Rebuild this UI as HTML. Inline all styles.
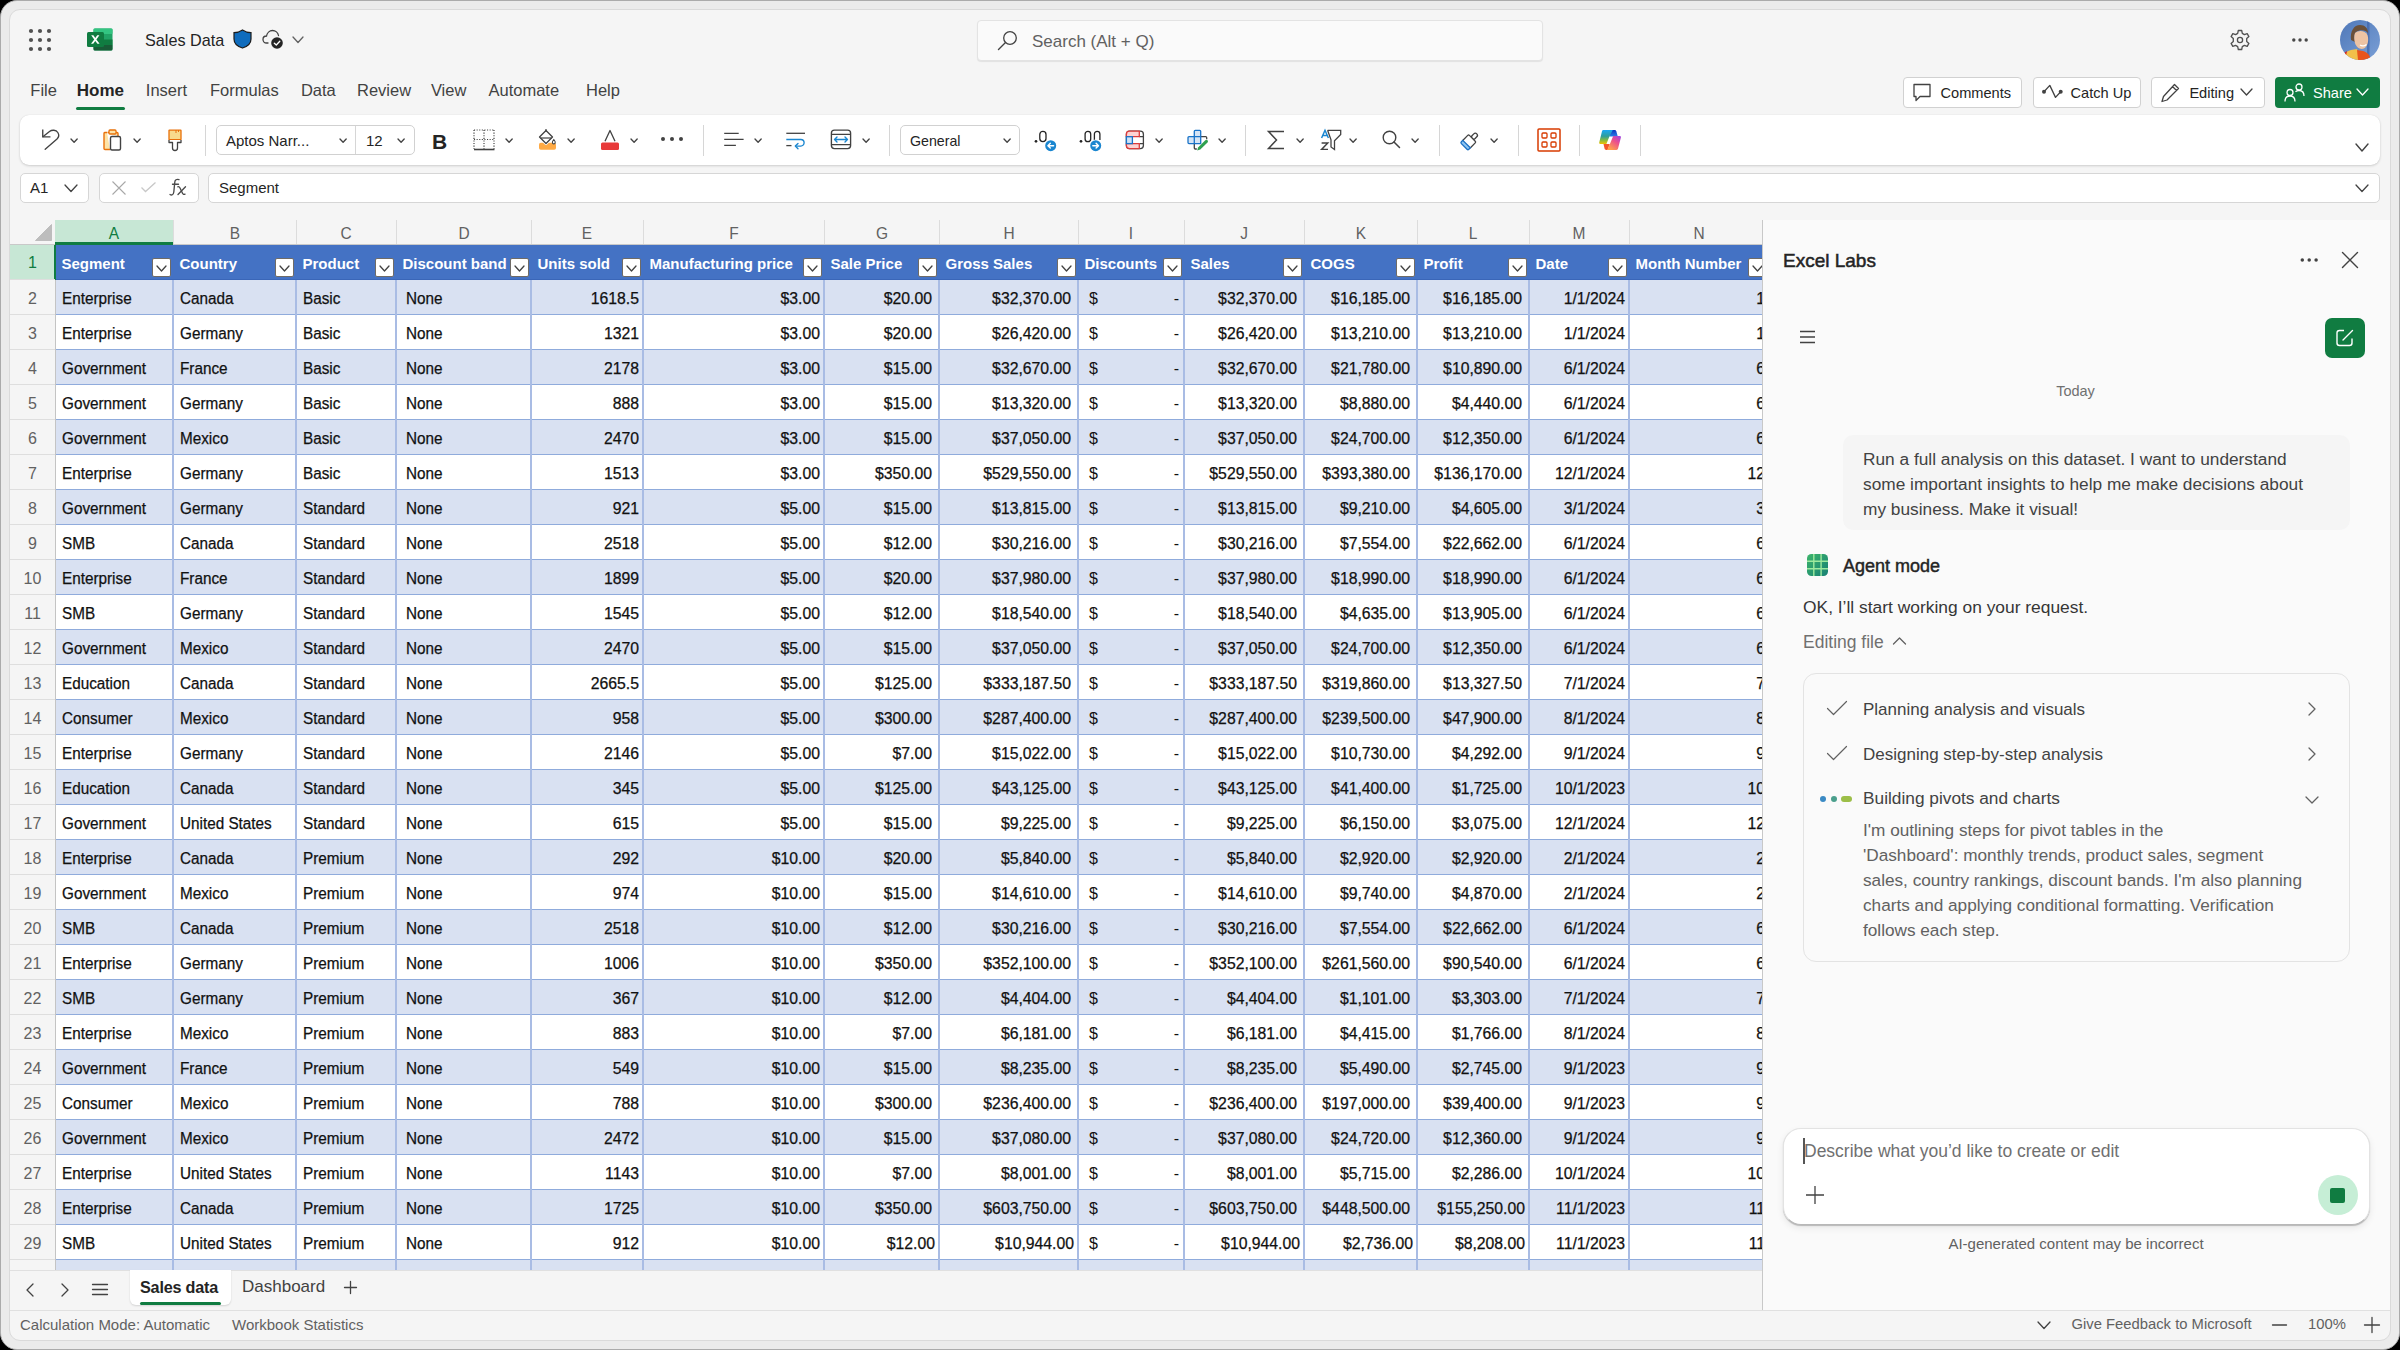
<!DOCTYPE html><html><head><meta charset="utf-8"><style>
html,body{margin:0;padding:0}
body{width:2400px;height:1350px;position:relative;overflow:hidden;background:#000;font-family:"Liberation Sans", sans-serif}
.t{position:absolute;white-space:nowrap;line-height:1}
.r{position:absolute}
svg.r{overflow:visible}
</style></head><body>
<div class="r" style="left:0px;top:0px;width:2400px;height:1350px;box-sizing:border-box;border:1px solid #ababab;border-radius:17px;background:#ebebeb"></div><div class="r" style="left:9px;top:9px;width:2382px;height:1332px;box-sizing:border-box;border:1px solid #dadada;border-radius:11px;background:#f5f5f5"></div><svg class="r" style="left:0px;top:0px;" width="60" height="60" viewBox="0 0 60 60"><circle cx="31" cy="31" r="2.1" fill="#505050"/><circle cx="31" cy="40" r="2.1" fill="#505050"/><circle cx="31" cy="49" r="2.1" fill="#505050"/><circle cx="40" cy="31" r="2.1" fill="#505050"/><circle cx="40" cy="40" r="2.1" fill="#505050"/><circle cx="40" cy="49" r="2.1" fill="#505050"/><circle cx="49" cy="31" r="2.1" fill="#505050"/><circle cx="49" cy="40" r="2.1" fill="#505050"/><circle cx="49" cy="49" r="2.1" fill="#505050"/></svg><svg class="r" style="left:87px;top:28px;" width="26" height="23" viewBox="0 0 26 23">
<rect x="6.5" y="0.5" width="19" height="22" rx="1.5" fill="#21a366"/>
<rect x="6.5" y="0.5" width="19" height="5.5" rx="1" fill="#33c481"/>
<rect x="6.5" y="11.5" width="19" height="5.5" fill="#107c41"/>
<path d="M6.5 17 H25.5 V21 a1.5 1.5 0 0 1 -1.5 1.5 H8 a1.5 1.5 0 0 1 -1.5 -1.5z" fill="#185c37"/>
<rect x="0" y="4" width="17" height="15" rx="1.5" fill="#107c41"/>
<path d="M4.2 7.2 L7.2 11.5 L4 15.8 H6.2 L8.3 12.9 L10.4 15.8 H12.6 L9.4 11.5 L12.4 7.2 H10.2 L8.3 10 L6.4 7.2z" fill="#fff"/>
</svg><div class="t" style="left:145px;top:32.29px;font-size:16.2px;color:#242424;font-weight:400;">Sales Data</div><svg class="r" style="left:233px;top:29px;" width="19" height="20" viewBox="0 0 19 20"><path d="M9.5 1 C6.5 3 4 3.6 1 3.6 V10 C1 14.5 4.5 17.5 9.5 19 C14.5 17.5 18 14.5 18 10 V3.6 C15 3.6 12.5 3 9.5 1z" fill="#0f6cbd" stroke="#1b1b1b" stroke-width="1.2"/></svg><svg class="r" style="left:262px;top:28px;" width="22" height="21" viewBox="0 0 22 21"><path d="M6 15 H4.5 C2.5 15 1 13.5 1 11.5 C1 9.5 2.5 8 4.5 8 C5 5 7.5 2.5 10.5 2.5 C13.5 2.5 16 4.8 16.5 7.5" fill="none" stroke="#424242" stroke-width="1.3" stroke-linecap="round"/>
<circle cx="15" cy="15" r="5.8" fill="#242424"/><path d="M12.3 15.2 L14.3 17 L17.8 13.2" fill="none" stroke="#fff" stroke-width="1.3" stroke-linecap="round" stroke-linejoin="round"/></svg><svg class="r" style="left:291.5px;top:36.25px;" width="12" height="7.5" viewBox="0 0 12 7.5"><path d="M1 1 L6.0 6.5 L11 1" fill="none" stroke="#616161" stroke-width="1.3" stroke-linecap="round" stroke-linejoin="round"/></svg><div class="r" style="left:977px;top:20px;width:566px;height:41px;box-sizing:border-box;background:#fafafa;border:1px solid #e3e3e3;border-radius:4px;box-shadow:0 1px 1px rgba(0,0,0,.08)"></div><svg class="r" style="left:997px;top:30px;" width="22" height="21" viewBox="0 0 22 21"><circle cx="13" cy="8" r="6.3" fill="none" stroke="#424242" stroke-width="1.3"/><path d="M8.5 12.6 L1.5 19.5" stroke="#424242" stroke-width="1.4" stroke-linecap="round"/></svg><div class="t" style="left:1032px;top:33.11px;font-size:17px;color:#616161;font-weight:400;">Search (Alt + Q)</div><svg class="r" style="left:2228px;top:28px;" width="24" height="24" viewBox="0 0 24 24"><g fill="none" stroke="#505050" stroke-width="1.3" stroke-linejoin="round">
<path d="M10.3 1.5 H13.7 L14.3 4.4 L16.4 5.6 L19.2 4.6 L20.9 7.6 L18.7 9.6 V12.4 L20.9 14.4 L19.2 17.4 L16.4 16.4 L14.3 17.6 L13.7 20.5 H10.3 L9.7 17.6 L7.6 16.4 L4.8 17.4 L3.1 14.4 L5.3 12.4 V9.6 L3.1 7.6 L4.8 4.6 L7.6 5.6 L9.7 4.4z" transform="translate(0 1)"/>
<circle cx="12" cy="12" r="2.6"/></g></svg><svg class="r" style="left:2289px;top:36px;" width="22" height="8" viewBox="0 0 22 8"><circle cx="4.8" cy="4" r="1.7" fill="#484848"/><circle cx="11" cy="4" r="1.7" fill="#484848"/><circle cx="17.2" cy="4" r="1.7" fill="#484848"/></svg><svg class="r" style="left:2340px;top:20px;" width="40" height="40" viewBox="0 0 40 40"><defs><clipPath id="av"><circle cx="20" cy="20" r="20"/></clipPath>
<linearGradient id="avbg" x1="0" y1="0" x2="1" y2="1"><stop offset="0" stop-color="#4f78b8"/><stop offset="1" stop-color="#7a9fd6"/></linearGradient></defs>
<g clip-path="url(#av)"><rect width="40" height="40" fill="url(#avbg)"/>
<rect x="27" y="0" width="2.5" height="40" fill="#3f64a8" opacity=".7"/>
<path d="M11 20 C10 11 14 5 20 5 C25 5 28 8 28 13 C26 10 20 9 16 12 C14 14 14 18 15 22z" fill="#6b5038"/>
<path d="M15 13 C18 10 25 10 27.5 15 C29 20 28 26 24 28.5 C20 30 16 27 15 23 C14 19 14 16 15 13z" fill="#edc3a3"/>
<path d="M20 25 C22 26.5 25 26 26.5 24.5" fill="none" stroke="#fff" stroke-width="1.2"/>
<path d="M3 40 C4 33 7 31 11 30 L17 29 L21 40z" fill="#f2c04a"/>
<path d="M17 30 L23 31 C27 32 30 35 31 40 H18z" fill="#e8541c"/>
<path d="M4 33 L7 31 L6 36z" fill="#d62020"/></g></svg><div class="t" style="left:30.3px;top:82.03px;font-size:16.5px;color:#424242;font-weight:400;">File</div><div class="t" style="left:76.8px;top:81.61px;font-size:17px;color:#242424;font-weight:700;letter-spacing:0px">Home</div><div class="t" style="left:145.8px;top:82.03px;font-size:16.5px;color:#424242;font-weight:400;">Insert</div><div class="t" style="left:210px;top:82.03px;font-size:16.5px;color:#424242;font-weight:400;">Formulas</div><div class="t" style="left:300.9px;top:82.03px;font-size:16.5px;color:#424242;font-weight:400;">Data</div><div class="t" style="left:357px;top:82.03px;font-size:16.5px;color:#424242;font-weight:400;">Review</div><div class="t" style="left:430.9px;top:82.03px;font-size:16.5px;color:#424242;font-weight:400;">View</div><div class="t" style="left:488.5px;top:82.03px;font-size:16.5px;color:#424242;font-weight:400;">Automate</div><div class="t" style="left:586px;top:82.03px;font-size:16.5px;color:#424242;font-weight:400;">Help</div><div class="r" style="left:76px;top:107px;width:49px;height:3px;background:#107c41;border-radius:2px"></div><div class="r" style="left:1903px;top:77px;width:119px;height:31px;box-sizing:border-box;background:#fff;border:1px solid #d1d1d1;border-radius:4px"></div><div class="r" style="left:2033px;top:77px;width:108px;height:31px;box-sizing:border-box;background:#fff;border:1px solid #d1d1d1;border-radius:4px"></div><div class="r" style="left:2151px;top:77px;width:114px;height:31px;box-sizing:border-box;background:#fff;border:1px solid #d1d1d1;border-radius:4px"></div><div class="r" style="left:2275px;top:77px;width:105px;height:31px;box-sizing:border-box;background:#107c41;border-radius:4px"></div><svg class="r" style="left:1912px;top:83px;" width="20" height="19" viewBox="0 0 20 19"><path d="M2 1.5 H18 V13.5 H8 L4 17.5 V13.5 H2z" fill="none" stroke="#424242" stroke-width="1.3" stroke-linejoin="round"/></svg><div class="t" style="left:1940.5px;top:85.64px;font-size:14.6px;color:#242424;font-weight:400;">Comments</div><svg class="r" style="left:2040px;top:82px;" width="24" height="20" viewBox="0 0 24 20"><path d="M4 9.7 L9.8 3.4 L15.5 15.4 L20.7 9.7" fill="none" stroke="#424242" stroke-width="1.3" stroke-linejoin="round" stroke-linecap="round"/><circle cx="4" cy="9.7" r="2" fill="#424242"/><circle cx="20.7" cy="9.7" r="2" fill="#424242"/></svg><div class="t" style="left:2070.5px;top:85.64px;font-size:14.6px;color:#242424;font-weight:400;">Catch Up</div><svg class="r" style="left:2160px;top:82px;" width="22" height="21" viewBox="0 0 22 21"><path d="M14.5 2.5 L18.5 6.5 L7 18 L2 19.5 L3.5 14.5z M12.5 4.5 L16.5 8.5" fill="none" stroke="#424242" stroke-width="1.3" stroke-linejoin="round"/></svg><div class="t" style="left:2189.4px;top:85.64px;font-size:14.6px;color:#242424;font-weight:400;">Editing</div><svg class="r" style="left:2240.0px;top:88.0px;" width="13" height="8" viewBox="0 0 13 8"><path d="M1 1 L6.5 7 L12 1" fill="none" stroke="#424242" stroke-width="1.3" stroke-linecap="round" stroke-linejoin="round"/></svg><svg class="r" style="left:2284px;top:83px;" width="22" height="19" viewBox="0 0 22 19"><g fill="none" stroke="#fff" stroke-width="1.3"><circle cx="6" cy="9.5" r="3"/><path d="M1 18.5 C1 15 3 13 6 13 C9 13 11 15 11 18.5"/><circle cx="15" cy="4" r="3"/><path d="M11.5 8.8 C12.3 7.9 13.6 7.5 15 7.5 C18 7.5 20 9.5 20 13"/></g></svg><div class="t" style="left:2313px;top:85.64px;font-size:14.6px;color:#fff;font-weight:400;">Share</div><svg class="r" style="left:2355.5px;top:88.0px;" width="13" height="8" viewBox="0 0 13 8"><path d="M1 1 L6.5 7 L12 1" fill="none" stroke="#fff" stroke-width="1.3" stroke-linecap="round" stroke-linejoin="round"/></svg><div class="r" style="left:20px;top:115px;width:2360px;height:50px;background:#fff;border-radius:9px;box-shadow:0 1px 2.5px rgba(0,0,0,.16),0 0 1px rgba(0,0,0,.10)"></div><div class="r" style="left:205px;top:125px;width:1px;height:31px;background:#d6d6d6"></div><div class="r" style="left:703px;top:125px;width:1px;height:31px;background:#d6d6d6"></div><div class="r" style="left:889px;top:125px;width:1px;height:31px;background:#d6d6d6"></div><div class="r" style="left:1245px;top:125px;width:1px;height:31px;background:#d6d6d6"></div><div class="r" style="left:1439px;top:125px;width:1px;height:31px;background:#d6d6d6"></div><div class="r" style="left:1518px;top:125px;width:1px;height:31px;background:#d6d6d6"></div><div class="r" style="left:1579px;top:125px;width:1px;height:31px;background:#d6d6d6"></div><div class="r" style="left:1640px;top:125px;width:1px;height:31px;background:#d6d6d6"></div><svg class="r" style="left:40px;top:128px;" width="22" height="23" viewBox="0 0 22 23"><path d="M2.75 2.2 V8.9 H9.8" fill="none" stroke="#424242" stroke-width="1.35" stroke-linecap="square" stroke-linejoin="miter"/><path d="M3.2 8.6 L9.5 3.5 C12 1.6 16 1.8 17.8 4.5 C19.2 6.6 18.8 9.2 17 11 L5.2 21.3" fill="none" stroke="#424242" stroke-width="1.35" stroke-linecap="round"/></svg><svg class="r" style="left:70.4px;top:137.8px;" width="8.2" height="5.2" viewBox="0 0 8.2 5.2"><path d="M1 1 L4.1 4.2 L7.2 1" fill="none" stroke="#424242" stroke-width="1.35" stroke-linecap="round" stroke-linejoin="round"/></svg><svg class="r" style="left:103px;top:129px;" width="19" height="22" viewBox="0 0 19 22"><path d="M4 3.5 H1.8 A1 1 0 0 0 1 4.5 V19.5 A1 1 0 0 0 2 20.5 H7" fill="#fde3a7" stroke="#e8710a" stroke-width="1.4"/>
<path d="M4.5 3.5 H14 A1 1 0 0 1 15 4.5 V7" fill="#fde3a7" stroke="#e8710a" stroke-width="1.4"/>
<rect x="6" y="1" width="7" height="4" rx="1" fill="#fde3a7" stroke="#e8710a" stroke-width="1.3"/>
<rect x="7.5" y="7.5" width="10" height="13.5" rx="1.5" fill="#fff" stroke="#424242" stroke-width="1.4"/></svg><svg class="r" style="left:132.9px;top:137.8px;" width="8.2" height="5.2" viewBox="0 0 8.2 5.2"><path d="M1 1 L4.1 4.2 L7.2 1" fill="none" stroke="#424242" stroke-width="1.35" stroke-linecap="round" stroke-linejoin="round"/></svg><svg class="r" style="left:168px;top:129px;" width="14" height="22" viewBox="0 0 14 22"><rect x="1" y="1.2" width="12" height="9.5" rx="0.4" fill="#f8db8c" stroke="#e8710a" stroke-width="1.3"/>
<path d="M8 1 V4 M10.5 1 V3" stroke="#e8710a" stroke-width="1"/>
<path d="M1 11 V13.5 H4.5 V19 A2.5 2.5 0 0 0 9.5 19 V13.5 H13 V11" fill="#fff" stroke="#424242" stroke-width="1.3" stroke-linejoin="round"/></svg><div class="r" style="left:216px;top:125px;width:199px;height:30px;box-sizing:border-box;border:1px solid #d1d1d1;border-radius:5px;background:#fff"></div><div class="r" style="left:355px;top:126px;width:1px;height:28px;background:#d6d6d6"></div><div class="t" style="left:226px;top:133.30px;font-size:15px;color:#242424;font-weight:400;">Aptos Narr...</div><svg class="r" style="left:338.9px;top:137.8px;" width="8.2" height="5.2" viewBox="0 0 8.2 5.2"><path d="M1 1 L4.1 4.2 L7.2 1" fill="none" stroke="#424242" stroke-width="1.35" stroke-linecap="round" stroke-linejoin="round"/></svg><div class="t" style="left:366px;top:133.30px;font-size:15px;color:#242424;font-weight:400;">12</div><svg class="r" style="left:396.9px;top:137.8px;" width="8.2" height="5.2" viewBox="0 0 8.2 5.2"><path d="M1 1 L4.1 4.2 L7.2 1" fill="none" stroke="#424242" stroke-width="1.35" stroke-linecap="round" stroke-linejoin="round"/></svg><div class="t" style="left:432px;top:130.62px;font-size:21px;color:#242424;font-weight:700;">B</div><svg class="r" style="left:473px;top:129px;" width="23" height="22" viewBox="0 0 23 22"><g stroke="#424242" stroke-width="1.2" stroke-dasharray="1.1 1.5" fill="none">
<path d="M1 1 H21 M1 10.5 H21 M1 1 V20 M11 1 V20 M21 1 V20"/></g><path d="M1 20.5 H21.5" stroke="#424242" stroke-width="1.6"/></svg><svg class="r" style="left:504.9px;top:137.8px;" width="8.2" height="5.2" viewBox="0 0 8.2 5.2"><path d="M1 1 L4.1 4.2 L7.2 1" fill="none" stroke="#424242" stroke-width="1.35" stroke-linecap="round" stroke-linejoin="round"/></svg><svg class="r" style="left:537px;top:129px;" width="21" height="22" viewBox="0 0 21 22"><rect x="2" y="13.8" width="17" height="7" rx="1.8" fill="#ffaa44"/>
<path d="M9 1.5 L15.5 8 L9 14.5 L2.5 8z" fill="#fff" stroke="#fff" stroke-width="3" stroke-linejoin="round"/>
<path d="M9 1.5 L15.5 8 L9 14.5 L2.5 8z" fill="#fff" stroke="#424242" stroke-width="1.3" stroke-linejoin="round"/>
<path d="M3.5 9 H14.5" stroke="#424242" stroke-width="1.2"/>
<path d="M9 0 V3" stroke="#424242" stroke-width="1.2"/>
<path d="M16.8 10.5 C17.9 11.8 18.4 12.7 18.2 13.5 A1.4 1.4 0 0 1 15.4 13.5 C15.2 12.7 15.7 11.8 16.8 10.5z" fill="#fff" stroke="#424242" stroke-width="1.1"/></svg><svg class="r" style="left:566.9px;top:137.8px;" width="8.2" height="5.2" viewBox="0 0 8.2 5.2"><path d="M1 1 L4.1 4.2 L7.2 1" fill="none" stroke="#424242" stroke-width="1.35" stroke-linecap="round" stroke-linejoin="round"/></svg><svg class="r" style="left:600px;top:129px;" width="20" height="22" viewBox="0 0 20 22"><path d="M5 12.3 L10 1.5 L15 12.3" fill="none" stroke="#424242" stroke-width="1.3" stroke-linejoin="round"/>
<rect x="1" y="13.5" width="18" height="7.5" rx="1.5" fill="#e83a3a"/></svg><svg class="r" style="left:629.9px;top:137.8px;" width="8.2" height="5.2" viewBox="0 0 8.2 5.2"><path d="M1 1 L4.1 4.2 L7.2 1" fill="none" stroke="#424242" stroke-width="1.35" stroke-linecap="round" stroke-linejoin="round"/></svg><svg class="r" style="left:660px;top:135px;" width="24" height="8" viewBox="0 0 24 8"><circle cx="3" cy="4" r="2" fill="#424242"/><circle cx="12" cy="4" r="2" fill="#424242"/><circle cx="21" cy="4" r="2" fill="#424242"/></svg><svg class="r" style="left:723px;top:131px;" width="22" height="17" viewBox="0 0 22 17"><path d="M1.2 2.3 H15.7 M1.2 8.4 H20.6 M1.2 14.4 H12.9" stroke="#424242" stroke-width="1.3"/></svg><svg class="r" style="left:753.9px;top:137.8px;" width="8.2" height="5.2" viewBox="0 0 8.2 5.2"><path d="M1 1 L4.1 4.2 L7.2 1" fill="none" stroke="#424242" stroke-width="1.35" stroke-linecap="round" stroke-linejoin="round"/></svg><svg class="r" style="left:785px;top:131px;" width="23" height="19" viewBox="0 0 23 19"><path d="M1.3 2.3 H20" stroke="#424242" stroke-width="1.3"/>
<path d="M1.3 8.5 H15.8 A3.3 3.3 0 0 1 15.8 15.1 H10.5" fill="none" stroke="#1a86d0" stroke-width="1.35"/>
<path d="M13 12.4 L10.3 15.1 L13 17.8" fill="none" stroke="#1a86d0" stroke-width="1.35" stroke-linecap="round" stroke-linejoin="round"/>
<path d="M1.3 14.6 H6.5" stroke="#424242" stroke-width="1.3"/></svg><svg class="r" style="left:830px;top:129px;" width="22" height="21" viewBox="0 0 22 21"><rect x="1.4" y="1.1" width="19.2" height="18.5" rx="3" fill="none" stroke="#424242" stroke-width="1.35"/>
<path d="M1.4 5.4 H20.6 M1.4 15.7 H20.6" stroke="#424242" stroke-width="1.3"/>
<path d="M4.5 10.5 H17.5 M7 8 L4.5 10.5 L7 13 M15 8 L17.5 10.5 L15 13" fill="none" stroke="#1a86d0" stroke-width="1.35" stroke-linecap="round" stroke-linejoin="round"/></svg><svg class="r" style="left:861.9px;top:137.8px;" width="8.2" height="5.2" viewBox="0 0 8.2 5.2"><path d="M1 1 L4.1 4.2 L7.2 1" fill="none" stroke="#424242" stroke-width="1.35" stroke-linecap="round" stroke-linejoin="round"/></svg><div class="r" style="left:900px;top:125px;width:120px;height:30px;box-sizing:border-box;border:1px solid #d1d1d1;border-radius:5px;background:#fff"></div><div class="t" style="left:910px;top:133.98px;font-size:14.2px;color:#242424;font-weight:400;">General</div><svg class="r" style="left:1002.9px;top:137.8px;" width="8.2" height="5.2" viewBox="0 0 8.2 5.2"><path d="M1 1 L4.1 4.2 L7.2 1" fill="none" stroke="#424242" stroke-width="1.35" stroke-linecap="round" stroke-linejoin="round"/></svg><svg class="r" style="left:1033px;top:130px;" width="24" height="22" viewBox="0 0 24 22"><circle cx="3" cy="11.3" r="1.35" fill="#242424"/><rect x="6.8" y="1.3" width="6.2" height="10.4" rx="3.1" fill="none" stroke="#242424" stroke-width="1.3"/>
<circle cx="17.7" cy="15.7" r="6.3" fill="#fff"/><circle cx="17.7" cy="15.7" r="5.5" fill="#1a86d0"/><path d="M20.6 15.7 H15 M17.3 13.3 L14.9 15.7 L17.3 18.1" fill="none" stroke="#fff" stroke-width="1.4" stroke-linecap="round" stroke-linejoin="round"/></svg><svg class="r" style="left:1078px;top:130px;" width="24" height="22" viewBox="0 0 24 22"><circle cx="3" cy="11.3" r="1.35" fill="#242424"/><rect x="7.1" y="1.3" width="5.6" height="10.4" rx="2.8" fill="none" stroke="#242424" stroke-width="1.3"/>
<path d="M16.4 10 V4.1 A2.75 2.75 0 0 1 21.9 4.1 V10" fill="none" stroke="#242424" stroke-width="1.3"/>
<circle cx="17.7" cy="15.7" r="6.3" fill="#fff"/><circle cx="17.7" cy="15.7" r="5.5" fill="#1a86d0"/><path d="M14.8 15.7 H20.4 M18.1 13.3 L20.5 15.7 L18.1 18.1" fill="none" stroke="#fff" stroke-width="1.4" stroke-linecap="round" stroke-linejoin="round"/></svg><svg class="r" style="left:1125px;top:130px;" width="20" height="20" viewBox="0 0 20 20"><rect x="1.4" y="1.2" width="17" height="17.4" rx="3" fill="#fff" stroke="#424242" stroke-width="1.3"/>
<path d="M14.3 6.7 H18.4 M14.3 13.6 H18.4" stroke="#424242" stroke-width="1.3"/>
<path d="M1.4 6.7 V4.2 A3 3 0 0 1 4.4 1.2 H14.3 V6.7z" fill="#fcd3d3" stroke="#dc3c3c" stroke-width="1.3" stroke-linejoin="round"/>
<path d="M1.4 13.6 H14.3 V18.6 H4.4 A3 3 0 0 1 1.4 15.6z" fill="#fcd3d3" stroke="#dc3c3c" stroke-width="1.3" stroke-linejoin="round"/>
<rect x="1.4" y="6.7" width="6" height="6.9" fill="#cfe2f6" stroke="#1a73c8" stroke-width="1.3"/></svg><svg class="r" style="left:1154.9px;top:137.8px;" width="8.2" height="5.2" viewBox="0 0 8.2 5.2"><path d="M1 1 L4.1 4.2 L7.2 1" fill="none" stroke="#424242" stroke-width="1.35" stroke-linecap="round" stroke-linejoin="round"/></svg><svg class="r" style="left:1186px;top:129px;" width="24" height="23" viewBox="0 0 24 23"><path d="M14.7 7.7 H19.7 A1 1 0 0 1 20.7 8.7 V10.2 M8.3 14.6 V19 A1 1 0 0 0 9.3 20 H10.8" fill="none" stroke="#424242" stroke-width="1.3"/>
<path d="M8.3 7.7 V2.3 A1 1 0 0 1 9.3 1.3 H13.7 A1 1 0 0 1 14.7 2.3 V14.6 H3 A1 1 0 0 1 2 13.6 V8.7 A1 1 0 0 1 3 7.7z" fill="#d6e4f5" stroke="#1a73c8" stroke-width="1.3" stroke-linejoin="round"/>
<path d="M8.3 7.7 H14.7 M8.3 7.7 V14.6" stroke="#1a73c8" stroke-width="1.3"/>
<path d="M11.2 21.6 L12.1 18.4 L19.3 11.2 A1.5 1.5 0 0 1 21.5 13.4 L14.3 20.6z" fill="#2ea04f"/></svg><svg class="r" style="left:1217.9px;top:137.8px;" width="8.2" height="5.2" viewBox="0 0 8.2 5.2"><path d="M1 1 L4.1 4.2 L7.2 1" fill="none" stroke="#424242" stroke-width="1.35" stroke-linecap="round" stroke-linejoin="round"/></svg><svg class="r" style="left:1267px;top:130px;" width="18" height="20" viewBox="0 0 18 20"><path d="M17 1.5 H1.5 L9.5 10 L1.5 18.5 H17" fill="none" stroke="#424242" stroke-width="1.5" stroke-linejoin="miter"/></svg><svg class="r" style="left:1295.9px;top:137.8px;" width="8.2" height="5.2" viewBox="0 0 8.2 5.2"><path d="M1 1 L4.1 4.2 L7.2 1" fill="none" stroke="#424242" stroke-width="1.35" stroke-linecap="round" stroke-linejoin="round"/></svg><svg class="r" style="left:1320px;top:129px;" width="23" height="22" viewBox="0 0 23 22"><path d="M1.6 9 L5 1.3 L8.4 9 M2.7 6.6 H7.3" fill="none" stroke="#1a86d0" stroke-width="1.5"/>
<path d="M1.6 14 H7.8 L1.6 20.4 H8" fill="none" stroke="#424242" stroke-width="1.4"/>
<path d="M7.6 1.3 H20.7 V5.5 L14.5 11.7 V20.5 L11 18 V10.8 L7.6 1.3" fill="none" stroke="#424242" stroke-width="1.3" stroke-linejoin="miter"/></svg><svg class="r" style="left:1348.9px;top:137.8px;" width="8.2" height="5.2" viewBox="0 0 8.2 5.2"><path d="M1 1 L4.1 4.2 L7.2 1" fill="none" stroke="#424242" stroke-width="1.35" stroke-linecap="round" stroke-linejoin="round"/></svg><svg class="r" style="left:1382px;top:130px;" width="19" height="20" viewBox="0 0 19 20"><circle cx="7.5" cy="7.5" r="6.3" fill="none" stroke="#424242" stroke-width="1.4"/><path d="M12 12 L17.5 17.5" stroke="#424242" stroke-width="1.5" stroke-linecap="round"/></svg><svg class="r" style="left:1410.9px;top:137.8px;" width="8.2" height="5.2" viewBox="0 0 8.2 5.2"><path d="M1 1 L4.1 4.2 L7.2 1" fill="none" stroke="#424242" stroke-width="1.35" stroke-linecap="round" stroke-linejoin="round"/></svg><svg class="r" style="left:1458px;top:128px;" width="24" height="24" viewBox="0 0 24 24"><g transform="rotate(45 12 12.5)">
<rect x="10" y="3" width="4.2" height="6.5" rx="2.1" fill="#fff" stroke="#424242" stroke-width="1.3"/>
<rect x="6.8" y="9.3" width="10.6" height="8.8" rx="1.2" fill="#fff" stroke="#424242" stroke-width="1.3"/>
<path d="M6.8 17.5 H17.4 V19.5 A1.3 1.3 0 0 1 16.1 20.8 H8.1 A1.3 1.3 0 0 1 6.8 19.5z" fill="#8ec5f2" stroke="#1a6fc4" stroke-width="1.3"/></g></svg><svg class="r" style="left:1489.9px;top:137.8px;" width="8.2" height="5.2" viewBox="0 0 8.2 5.2"><path d="M1 1 L4.1 4.2 L7.2 1" fill="none" stroke="#424242" stroke-width="1.35" stroke-linecap="round" stroke-linejoin="round"/></svg><svg class="r" style="left:1537px;top:128px;" width="24" height="24" viewBox="0 0 24 24"><rect x="1" y="1" width="22" height="22" rx="1" fill="#fff" stroke="#d83b01" stroke-width="1.5"/>
<rect x="5" y="5" width="5" height="5" rx="1" fill="none" stroke="#d83b01" stroke-width="1.3"/>
<rect x="14" y="5" width="5" height="5" rx="1" fill="none" stroke="#d83b01" stroke-width="1.3"/>
<rect x="5" y="14" width="5" height="5" rx="1" fill="none" stroke="#d83b01" stroke-width="1.3"/>
<rect x="14" y="14" width="5" height="5" rx="1" fill="none" stroke="#d83b01" stroke-width="1.3"/></svg><svg class="r" style="left:1599px;top:130px;" width="22" height="20" viewBox="0 0 22 20"><defs><linearGradient id="cpA" x1="0" y1="0" x2="0" y2="1"><stop offset="0" stop-color="#1aa7f5"/><stop offset=".45" stop-color="#2f9e9a"/><stop offset=".7" stop-color="#7db84a"/><stop offset="1" stop-color="#f0c400"/></linearGradient>
<linearGradient id="cpB" x1="1" y1="0" x2="0.3" y2="1"><stop offset="0" stop-color="#9b45e6"/><stop offset=".45" stop-color="#ec4f8c"/><stop offset="1" stop-color="#ffa24a"/></linearGradient>
<linearGradient id="cpC" x1="0" y1="0" x2="0" y2="1"><stop offset="0" stop-color="#0a36c0"/><stop offset="1" stop-color="#2a7ee8"/></linearGradient></defs>
<path d="M12 0 H15.5 C16.4 0 17 0.5 17.3 1.3 L18.8 6.5 H10.3z" fill="url(#cpC)"/>
<path d="M4.5 0 H13.8 L10.4 6.5 L7.4 14 H1.5 C0.6 14 0 13.4 0.2 12.5 L3 1.2 C3.2 0.5 3.8 0 4.5 0z" fill="url(#cpA)"/>
<path d="M4.5 14 H10.8 L8.6 20 H7.2 C6.4 20 5.8 19.5 5.6 18.8z" fill="#f4572b"/>
<path d="M14.2 6 H20.8 C21.6 6 22.1 6.7 21.9 7.5 L19 18.8 C18.8 19.5 18.2 20 17.5 20 H8.2 L10.9 14z" fill="url(#cpB)"/></svg><svg class="r" style="left:2354.5px;top:142.5px;" width="14" height="9" viewBox="0 0 14 9"><path d="M1 1 L7.0 8 L13 1" fill="none" stroke="#424242" stroke-width="1.4" stroke-linecap="round" stroke-linejoin="round"/></svg><div class="r" style="left:20px;top:173px;width:69px;height:30px;box-sizing:border-box;border:1px solid #d6d6d6;border-radius:5px;background:#fff"></div><div class="t" style="left:30px;top:179.80px;font-size:15px;color:#242424;font-weight:400;">A1</div><svg class="r" style="left:64.0px;top:183.75px;" width="14" height="8.5" viewBox="0 0 14 8.5"><path d="M1 1 L7.0 7.5 L13 1" fill="none" stroke="#424242" stroke-width="1.3" stroke-linecap="round" stroke-linejoin="round"/></svg><div class="r" style="left:99px;top:173px;width:100px;height:30px;box-sizing:border-box;border:1px solid #d6d6d6;border-radius:5px;background:#fff"></div><svg class="r" style="left:111px;top:180px;" width="16" height="16" viewBox="0 0 16 16"><path d="M1.5 1.5 L14.5 14.5 M14.5 1.5 L1.5 14.5" stroke="#a8a8a8" stroke-width="1.1"/></svg><svg class="r" style="left:140px;top:181px;" width="17" height="12" viewBox="0 0 17 12"><path d="M1.5 6.5 L5.5 10.5 L15.5 1.5" fill="none" stroke="#c8c8c8" stroke-width="1.3"/></svg><svg class="r" style="left:168px;top:177px;" width="20" height="20" viewBox="0 0 20 20"><g fill="none" stroke="#4a4a4a" stroke-width="1.35" stroke-linecap="round"><path d="M2 17.5 C3.5 18.5 5.5 18 5.8 15 L6.8 5 C7 2.8 8.5 2 11 2.6"/><path d="M4.5 7.2 H10.5"/><path d="M9.8 9.8 C10.8 9.4 11.5 10 12 11 L14.5 16.2 C15 17.2 16 17.8 17 17.2"/><path d="M17.5 9.8 L10 17.5"/></g></svg><div class="r" style="left:208px;top:173px;width:2172px;height:30px;box-sizing:border-box;border:1px solid #d6d6d6;border-radius:5px;background:#fff"></div><div class="t" style="left:219px;top:179.80px;font-size:15px;color:#242424;font-weight:400;">Segment</div><svg class="r" style="left:2355.0px;top:183.75px;" width="14" height="8.5" viewBox="0 0 14 8.5"><path d="M1 1 L7.0 7.5 L13 1" fill="none" stroke="#424242" stroke-width="1.3" stroke-linecap="round" stroke-linejoin="round"/></svg><div class="r" style="left:0;top:0;width:1763px;height:1270px;overflow:hidden"><div class="r" style="left:10px;top:220px;width:1753px;height:25px;background:#f5f5f5"></div><div class="r" style="left:10px;top:244px;width:1753px;height:1px;background:#c9c9c9"></div><svg class="r" style="left:34px;top:223px;" width="19" height="19" viewBox="0 0 19 19"><path d="M17.5 1.5 V17.5 H1.5z" fill="#bdbdbd" stroke="#bdbdbd" stroke-width="1" stroke-linejoin="round"/></svg><div class="r" style="left:55px;top:220px;width:118px;height:25px;background:#c7e7d5"></div><div class="r" style="left:55px;top:242px;width:118px;height:3px;background:#107c41"></div><div class="t" style="left:-386.0px;width:1000px;text-align:center;top:225.20px;font-size:16.3px;color:#107c41;font-weight:400;;transform:scaleX(0.95);transform-origin:center">A</div><div class="r" style="left:173px;top:220px;width:1px;height:24px;background:#dcdcdc"></div><div class="t" style="left:-265.5px;width:1000px;text-align:center;top:225.20px;font-size:16.3px;color:#616161;font-weight:400;;transform:scaleX(0.95);transform-origin:center">B</div><div class="r" style="left:296px;top:220px;width:1px;height:24px;background:#dcdcdc"></div><div class="t" style="left:-154.0px;width:1000px;text-align:center;top:225.20px;font-size:16.3px;color:#616161;font-weight:400;;transform:scaleX(0.95);transform-origin:center">C</div><div class="r" style="left:396px;top:220px;width:1px;height:24px;background:#dcdcdc"></div><div class="t" style="left:-36.5px;width:1000px;text-align:center;top:225.20px;font-size:16.3px;color:#616161;font-weight:400;;transform:scaleX(0.95);transform-origin:center">D</div><div class="r" style="left:531px;top:220px;width:1px;height:24px;background:#dcdcdc"></div><div class="t" style="left:87.0px;width:1000px;text-align:center;top:225.20px;font-size:16.3px;color:#616161;font-weight:400;;transform:scaleX(0.95);transform-origin:center">E</div><div class="r" style="left:643px;top:220px;width:1px;height:24px;background:#dcdcdc"></div><div class="t" style="left:233.5px;width:1000px;text-align:center;top:225.20px;font-size:16.3px;color:#616161;font-weight:400;;transform:scaleX(0.95);transform-origin:center">F</div><div class="r" style="left:824px;top:220px;width:1px;height:24px;background:#dcdcdc"></div><div class="t" style="left:381.5px;width:1000px;text-align:center;top:225.20px;font-size:16.3px;color:#616161;font-weight:400;;transform:scaleX(0.95);transform-origin:center">G</div><div class="r" style="left:939px;top:220px;width:1px;height:24px;background:#dcdcdc"></div><div class="t" style="left:508.5px;width:1000px;text-align:center;top:225.20px;font-size:16.3px;color:#616161;font-weight:400;;transform:scaleX(0.95);transform-origin:center">H</div><div class="r" style="left:1078px;top:220px;width:1px;height:24px;background:#dcdcdc"></div><div class="t" style="left:631.0px;width:1000px;text-align:center;top:225.20px;font-size:16.3px;color:#616161;font-weight:400;;transform:scaleX(0.95);transform-origin:center">I</div><div class="r" style="left:1184px;top:220px;width:1px;height:24px;background:#dcdcdc"></div><div class="t" style="left:744.0px;width:1000px;text-align:center;top:225.20px;font-size:16.3px;color:#616161;font-weight:400;;transform:scaleX(0.95);transform-origin:center">J</div><div class="r" style="left:1304px;top:220px;width:1px;height:24px;background:#dcdcdc"></div><div class="t" style="left:860.5px;width:1000px;text-align:center;top:225.20px;font-size:16.3px;color:#616161;font-weight:400;;transform:scaleX(0.95);transform-origin:center">K</div><div class="r" style="left:1417px;top:220px;width:1px;height:24px;background:#dcdcdc"></div><div class="t" style="left:973.0px;width:1000px;text-align:center;top:225.20px;font-size:16.3px;color:#616161;font-weight:400;;transform:scaleX(0.95);transform-origin:center">L</div><div class="r" style="left:1529px;top:220px;width:1px;height:24px;background:#dcdcdc"></div><div class="t" style="left:1079.0px;width:1000px;text-align:center;top:225.20px;font-size:16.3px;color:#616161;font-weight:400;;transform:scaleX(0.95);transform-origin:center">M</div><div class="r" style="left:1629px;top:220px;width:1px;height:24px;background:#dcdcdc"></div><div class="t" style="left:1199.0px;width:1000px;text-align:center;top:225.20px;font-size:16.3px;color:#616161;font-weight:400;;transform:scaleX(0.95);transform-origin:center">N</div><div class="r" style="left:173px;top:220px;width:1px;height:24px;background:#dcdcdc"></div><div class="r" style="left:10px;top:245px;width:45px;height:1025px;background:#f5f5f5"></div><div class="r" style="left:55px;top:245px;width:1px;height:1025px;background:#c4c4c4"></div><div class="r" style="left:10px;top:245px;width:45px;height:35px;background:#c7e7d5"></div><div class="r" style="left:54px;top:245px;width:2px;height:35px;background:#107c41"></div><div class="t" style="left:-467.5px;width:1000px;text-align:center;top:255.46px;font-size:16px;color:#107c41;font-weight:400;">1</div><div class="r" style="left:10px;top:279px;width:45px;height:1px;background:#dedede"></div><div class="t" style="left:-467.5px;width:1000px;text-align:center;top:290.66px;font-size:16px;color:#616161;font-weight:400;">2</div><div class="r" style="left:10px;top:314px;width:45px;height:1px;background:#dedede"></div><div class="t" style="left:-467.5px;width:1000px;text-align:center;top:325.66px;font-size:16px;color:#616161;font-weight:400;">3</div><div class="r" style="left:10px;top:349px;width:45px;height:1px;background:#dedede"></div><div class="t" style="left:-467.5px;width:1000px;text-align:center;top:360.66px;font-size:16px;color:#616161;font-weight:400;">4</div><div class="r" style="left:10px;top:384px;width:45px;height:1px;background:#dedede"></div><div class="t" style="left:-467.5px;width:1000px;text-align:center;top:395.66px;font-size:16px;color:#616161;font-weight:400;">5</div><div class="r" style="left:10px;top:419px;width:45px;height:1px;background:#dedede"></div><div class="t" style="left:-467.5px;width:1000px;text-align:center;top:430.66px;font-size:16px;color:#616161;font-weight:400;">6</div><div class="r" style="left:10px;top:454px;width:45px;height:1px;background:#dedede"></div><div class="t" style="left:-467.5px;width:1000px;text-align:center;top:465.66px;font-size:16px;color:#616161;font-weight:400;">7</div><div class="r" style="left:10px;top:489px;width:45px;height:1px;background:#dedede"></div><div class="t" style="left:-467.5px;width:1000px;text-align:center;top:500.66px;font-size:16px;color:#616161;font-weight:400;">8</div><div class="r" style="left:10px;top:524px;width:45px;height:1px;background:#dedede"></div><div class="t" style="left:-467.5px;width:1000px;text-align:center;top:535.66px;font-size:16px;color:#616161;font-weight:400;">9</div><div class="r" style="left:10px;top:559px;width:45px;height:1px;background:#dedede"></div><div class="t" style="left:-467.5px;width:1000px;text-align:center;top:570.66px;font-size:16px;color:#616161;font-weight:400;">10</div><div class="r" style="left:10px;top:594px;width:45px;height:1px;background:#dedede"></div><div class="t" style="left:-467.5px;width:1000px;text-align:center;top:605.66px;font-size:16px;color:#616161;font-weight:400;">11</div><div class="r" style="left:10px;top:629px;width:45px;height:1px;background:#dedede"></div><div class="t" style="left:-467.5px;width:1000px;text-align:center;top:640.66px;font-size:16px;color:#616161;font-weight:400;">12</div><div class="r" style="left:10px;top:664px;width:45px;height:1px;background:#dedede"></div><div class="t" style="left:-467.5px;width:1000px;text-align:center;top:675.66px;font-size:16px;color:#616161;font-weight:400;">13</div><div class="r" style="left:10px;top:699px;width:45px;height:1px;background:#dedede"></div><div class="t" style="left:-467.5px;width:1000px;text-align:center;top:710.66px;font-size:16px;color:#616161;font-weight:400;">14</div><div class="r" style="left:10px;top:734px;width:45px;height:1px;background:#dedede"></div><div class="t" style="left:-467.5px;width:1000px;text-align:center;top:745.66px;font-size:16px;color:#616161;font-weight:400;">15</div><div class="r" style="left:10px;top:769px;width:45px;height:1px;background:#dedede"></div><div class="t" style="left:-467.5px;width:1000px;text-align:center;top:780.66px;font-size:16px;color:#616161;font-weight:400;">16</div><div class="r" style="left:10px;top:804px;width:45px;height:1px;background:#dedede"></div><div class="t" style="left:-467.5px;width:1000px;text-align:center;top:815.66px;font-size:16px;color:#616161;font-weight:400;">17</div><div class="r" style="left:10px;top:839px;width:45px;height:1px;background:#dedede"></div><div class="t" style="left:-467.5px;width:1000px;text-align:center;top:850.66px;font-size:16px;color:#616161;font-weight:400;">18</div><div class="r" style="left:10px;top:874px;width:45px;height:1px;background:#dedede"></div><div class="t" style="left:-467.5px;width:1000px;text-align:center;top:885.66px;font-size:16px;color:#616161;font-weight:400;">19</div><div class="r" style="left:10px;top:909px;width:45px;height:1px;background:#dedede"></div><div class="t" style="left:-467.5px;width:1000px;text-align:center;top:920.66px;font-size:16px;color:#616161;font-weight:400;">20</div><div class="r" style="left:10px;top:944px;width:45px;height:1px;background:#dedede"></div><div class="t" style="left:-467.5px;width:1000px;text-align:center;top:955.66px;font-size:16px;color:#616161;font-weight:400;">21</div><div class="r" style="left:10px;top:979px;width:45px;height:1px;background:#dedede"></div><div class="t" style="left:-467.5px;width:1000px;text-align:center;top:990.66px;font-size:16px;color:#616161;font-weight:400;">22</div><div class="r" style="left:10px;top:1014px;width:45px;height:1px;background:#dedede"></div><div class="t" style="left:-467.5px;width:1000px;text-align:center;top:1025.66px;font-size:16px;color:#616161;font-weight:400;">23</div><div class="r" style="left:10px;top:1049px;width:45px;height:1px;background:#dedede"></div><div class="t" style="left:-467.5px;width:1000px;text-align:center;top:1060.66px;font-size:16px;color:#616161;font-weight:400;">24</div><div class="r" style="left:10px;top:1084px;width:45px;height:1px;background:#dedede"></div><div class="t" style="left:-467.5px;width:1000px;text-align:center;top:1095.66px;font-size:16px;color:#616161;font-weight:400;">25</div><div class="r" style="left:10px;top:1119px;width:45px;height:1px;background:#dedede"></div><div class="t" style="left:-467.5px;width:1000px;text-align:center;top:1130.66px;font-size:16px;color:#616161;font-weight:400;">26</div><div class="r" style="left:10px;top:1154px;width:45px;height:1px;background:#dedede"></div><div class="t" style="left:-467.5px;width:1000px;text-align:center;top:1165.66px;font-size:16px;color:#616161;font-weight:400;">27</div><div class="r" style="left:10px;top:1189px;width:45px;height:1px;background:#dedede"></div><div class="t" style="left:-467.5px;width:1000px;text-align:center;top:1200.66px;font-size:16px;color:#616161;font-weight:400;">28</div><div class="r" style="left:10px;top:1224px;width:45px;height:1px;background:#dedede"></div><div class="t" style="left:-467.5px;width:1000px;text-align:center;top:1235.66px;font-size:16px;color:#616161;font-weight:400;">29</div><div class="r" style="left:10px;top:1259px;width:45px;height:1px;background:#dedede"></div><div class="t" style="left:-467.5px;width:1000px;text-align:center;top:1270.66px;font-size:16px;color:#616161;font-weight:400;">30</div><div class="r" style="left:56px;top:245px;width:1713px;height:34px;background:#4472c4"></div><div class="r" style="left:56px;top:279px;width:1713px;height:1px;background:#3a66b8"></div><div class="t" style="left:61.5px;top:255.70px;font-size:15px;color:#fff;font-weight:700;letter-spacing:0px">Segment</div><div class="r" style="left:152px;top:258px;width:19px;height:19px;box-sizing:border-box;background:#fff;border:1px solid #6f6b66;border-radius:2px"></div><svg class="r" style="left:156.0px;top:264.5px;" width="11" height="7" viewBox="0 0 11 7"><path d="M1 1 L5.5 6 L10 1" fill="none" stroke="#424242" stroke-width="1.3" stroke-linecap="round" stroke-linejoin="round"/></svg><div class="t" style="left:179.5px;top:255.70px;font-size:15px;color:#fff;font-weight:700;letter-spacing:0px">Country</div><div class="r" style="left:275px;top:258px;width:19px;height:19px;box-sizing:border-box;background:#fff;border:1px solid #6f6b66;border-radius:2px"></div><svg class="r" style="left:279.0px;top:264.5px;" width="11" height="7" viewBox="0 0 11 7"><path d="M1 1 L5.5 6 L10 1" fill="none" stroke="#424242" stroke-width="1.3" stroke-linecap="round" stroke-linejoin="round"/></svg><div class="t" style="left:302.5px;top:255.70px;font-size:15px;color:#fff;font-weight:700;letter-spacing:0px">Product</div><div class="r" style="left:375px;top:258px;width:19px;height:19px;box-sizing:border-box;background:#fff;border:1px solid #6f6b66;border-radius:2px"></div><svg class="r" style="left:379.0px;top:264.5px;" width="11" height="7" viewBox="0 0 11 7"><path d="M1 1 L5.5 6 L10 1" fill="none" stroke="#424242" stroke-width="1.3" stroke-linecap="round" stroke-linejoin="round"/></svg><div class="t" style="left:402.5px;top:255.70px;font-size:15px;color:#fff;font-weight:700;letter-spacing:0px">Discount band</div><div class="r" style="left:510px;top:258px;width:19px;height:19px;box-sizing:border-box;background:#fff;border:1px solid #6f6b66;border-radius:2px"></div><svg class="r" style="left:514.0px;top:264.5px;" width="11" height="7" viewBox="0 0 11 7"><path d="M1 1 L5.5 6 L10 1" fill="none" stroke="#424242" stroke-width="1.3" stroke-linecap="round" stroke-linejoin="round"/></svg><div class="t" style="left:537.5px;top:255.70px;font-size:15px;color:#fff;font-weight:700;letter-spacing:0px">Units sold</div><div class="r" style="left:622px;top:258px;width:19px;height:19px;box-sizing:border-box;background:#fff;border:1px solid #6f6b66;border-radius:2px"></div><svg class="r" style="left:626.0px;top:264.5px;" width="11" height="7" viewBox="0 0 11 7"><path d="M1 1 L5.5 6 L10 1" fill="none" stroke="#424242" stroke-width="1.3" stroke-linecap="round" stroke-linejoin="round"/></svg><div class="t" style="left:649.5px;top:255.70px;font-size:15px;color:#fff;font-weight:700;letter-spacing:0px">Manufacturing price</div><div class="r" style="left:803px;top:258px;width:19px;height:19px;box-sizing:border-box;background:#fff;border:1px solid #6f6b66;border-radius:2px"></div><svg class="r" style="left:807.0px;top:264.5px;" width="11" height="7" viewBox="0 0 11 7"><path d="M1 1 L5.5 6 L10 1" fill="none" stroke="#424242" stroke-width="1.3" stroke-linecap="round" stroke-linejoin="round"/></svg><div class="t" style="left:830.5px;top:255.70px;font-size:15px;color:#fff;font-weight:700;letter-spacing:0px">Sale Price</div><div class="r" style="left:918px;top:258px;width:19px;height:19px;box-sizing:border-box;background:#fff;border:1px solid #6f6b66;border-radius:2px"></div><svg class="r" style="left:922.0px;top:264.5px;" width="11" height="7" viewBox="0 0 11 7"><path d="M1 1 L5.5 6 L10 1" fill="none" stroke="#424242" stroke-width="1.3" stroke-linecap="round" stroke-linejoin="round"/></svg><div class="t" style="left:945.5px;top:255.70px;font-size:15px;color:#fff;font-weight:700;letter-spacing:0px">Gross Sales</div><div class="r" style="left:1057px;top:258px;width:19px;height:19px;box-sizing:border-box;background:#fff;border:1px solid #6f6b66;border-radius:2px"></div><svg class="r" style="left:1061.0px;top:264.5px;" width="11" height="7" viewBox="0 0 11 7"><path d="M1 1 L5.5 6 L10 1" fill="none" stroke="#424242" stroke-width="1.3" stroke-linecap="round" stroke-linejoin="round"/></svg><div class="t" style="left:1084.5px;top:255.70px;font-size:15px;color:#fff;font-weight:700;letter-spacing:0px">Discounts</div><div class="r" style="left:1163px;top:258px;width:19px;height:19px;box-sizing:border-box;background:#fff;border:1px solid #6f6b66;border-radius:2px"></div><svg class="r" style="left:1167.0px;top:264.5px;" width="11" height="7" viewBox="0 0 11 7"><path d="M1 1 L5.5 6 L10 1" fill="none" stroke="#424242" stroke-width="1.3" stroke-linecap="round" stroke-linejoin="round"/></svg><div class="t" style="left:1190.5px;top:255.70px;font-size:15px;color:#fff;font-weight:700;letter-spacing:0px">Sales</div><div class="r" style="left:1283px;top:258px;width:19px;height:19px;box-sizing:border-box;background:#fff;border:1px solid #6f6b66;border-radius:2px"></div><svg class="r" style="left:1287.0px;top:264.5px;" width="11" height="7" viewBox="0 0 11 7"><path d="M1 1 L5.5 6 L10 1" fill="none" stroke="#424242" stroke-width="1.3" stroke-linecap="round" stroke-linejoin="round"/></svg><div class="t" style="left:1310.5px;top:255.70px;font-size:15px;color:#fff;font-weight:700;letter-spacing:0px">COGS</div><div class="r" style="left:1396px;top:258px;width:19px;height:19px;box-sizing:border-box;background:#fff;border:1px solid #6f6b66;border-radius:2px"></div><svg class="r" style="left:1400.0px;top:264.5px;" width="11" height="7" viewBox="0 0 11 7"><path d="M1 1 L5.5 6 L10 1" fill="none" stroke="#424242" stroke-width="1.3" stroke-linecap="round" stroke-linejoin="round"/></svg><div class="t" style="left:1423.5px;top:255.70px;font-size:15px;color:#fff;font-weight:700;letter-spacing:0px">Profit</div><div class="r" style="left:1508px;top:258px;width:19px;height:19px;box-sizing:border-box;background:#fff;border:1px solid #6f6b66;border-radius:2px"></div><svg class="r" style="left:1512.0px;top:264.5px;" width="11" height="7" viewBox="0 0 11 7"><path d="M1 1 L5.5 6 L10 1" fill="none" stroke="#424242" stroke-width="1.3" stroke-linecap="round" stroke-linejoin="round"/></svg><div class="t" style="left:1535.5px;top:255.70px;font-size:15px;color:#fff;font-weight:700;letter-spacing:0px">Date</div><div class="r" style="left:1608px;top:258px;width:19px;height:19px;box-sizing:border-box;background:#fff;border:1px solid #6f6b66;border-radius:2px"></div><svg class="r" style="left:1612.0px;top:264.5px;" width="11" height="7" viewBox="0 0 11 7"><path d="M1 1 L5.5 6 L10 1" fill="none" stroke="#424242" stroke-width="1.3" stroke-linecap="round" stroke-linejoin="round"/></svg><div class="t" style="left:1635.5px;top:255.70px;font-size:15px;color:#fff;font-weight:700;letter-spacing:0px">Month Number</div><div class="r" style="left:1748px;top:258px;width:19px;height:19px;box-sizing:border-box;background:#fff;border:1px solid #6f6b66;border-radius:2px"></div><svg class="r" style="left:1752.0px;top:264.5px;" width="11" height="7" viewBox="0 0 11 7"><path d="M1 1 L5.5 6 L10 1" fill="none" stroke="#424242" stroke-width="1.3" stroke-linecap="round" stroke-linejoin="round"/></svg><div class="r" style="left:56px;top:280px;width:1713px;height:35px;background:#d9e1f2"></div><div class="r" style="left:56px;top:314px;width:1713px;height:1px;background:#8fabdc"></div><div class="t" style="left:61.5px;top:290.76px;font-size:16px;color:#111;font-weight:400;-webkit-text-stroke:0.25px #111;transform:scaleX(0.955);transform-origin:left">Enterprise</div><div class="t" style="left:179.5px;top:290.76px;font-size:16px;color:#111;font-weight:400;-webkit-text-stroke:0.25px #111;transform:scaleX(0.955);transform-origin:left">Canada</div><div class="t" style="left:302.5px;top:290.76px;font-size:16px;color:#111;font-weight:400;-webkit-text-stroke:0.25px #111;transform:scaleX(0.955);transform-origin:left">Basic</div><div class="t" style="left:406px;top:290.76px;font-size:16px;color:#111;font-weight:400;-webkit-text-stroke:0.25px #111;transform:scaleX(0.955);transform-origin:left">None</div><div class="t" style="left:-161px;width:800px;text-align:right;top:290.76px;font-size:16px;color:#111;font-weight:400;-webkit-text-stroke:0.25px #111;transform:scaleX(0.985);transform-origin:right">1618.5</div><div class="t" style="left:20px;width:800px;text-align:right;top:290.76px;font-size:16px;color:#111;font-weight:400;-webkit-text-stroke:0.25px #111;transform:scaleX(0.985);transform-origin:right">$3.00</div><div class="t" style="left:131.5px;width:800px;text-align:right;top:290.76px;font-size:16px;color:#111;font-weight:400;-webkit-text-stroke:0.25px #111;transform:scaleX(0.985);transform-origin:right">$20.00</div><div class="t" style="left:270.5px;width:800px;text-align:right;top:290.76px;font-size:16px;color:#111;font-weight:400;-webkit-text-stroke:0.25px #111;transform:scaleX(0.985);transform-origin:right">$32,370.00</div><div class="t" style="left:1089px;top:290.76px;font-size:16px;color:#111;font-weight:400;">$</div><div class="t" style="left:379px;width:800px;text-align:right;top:290.76px;font-size:16px;color:#111;font-weight:400;">-</div><div class="t" style="left:496.5px;width:800px;text-align:right;top:290.76px;font-size:16px;color:#111;font-weight:400;-webkit-text-stroke:0.25px #111;transform:scaleX(0.985);transform-origin:right">$32,370.00</div><div class="t" style="left:609.5px;width:800px;text-align:right;top:290.76px;font-size:16px;color:#111;font-weight:400;-webkit-text-stroke:0.25px #111;transform:scaleX(0.985);transform-origin:right">$16,185.00</div><div class="t" style="left:721.5px;width:800px;text-align:right;top:290.76px;font-size:16px;color:#111;font-weight:400;-webkit-text-stroke:0.25px #111;transform:scaleX(0.985);transform-origin:right">$16,185.00</div><div class="t" style="left:825px;width:800px;text-align:right;top:290.76px;font-size:16px;color:#111;font-weight:400;-webkit-text-stroke:0.25px #111;transform:scaleX(0.985);transform-origin:right">1/1/2024</div><div class="t" style="left:965px;width:800px;text-align:right;top:290.76px;font-size:16px;color:#111;font-weight:400;-webkit-text-stroke:0.25px #111;transform:scaleX(0.985);transform-origin:right">1</div><div class="r" style="left:56px;top:315px;width:1713px;height:35px;background:#fff"></div><div class="r" style="left:56px;top:349px;width:1713px;height:1px;background:#8fabdc"></div><div class="t" style="left:61.5px;top:325.76px;font-size:16px;color:#111;font-weight:400;-webkit-text-stroke:0.25px #111;transform:scaleX(0.955);transform-origin:left">Enterprise</div><div class="t" style="left:179.5px;top:325.76px;font-size:16px;color:#111;font-weight:400;-webkit-text-stroke:0.25px #111;transform:scaleX(0.955);transform-origin:left">Germany</div><div class="t" style="left:302.5px;top:325.76px;font-size:16px;color:#111;font-weight:400;-webkit-text-stroke:0.25px #111;transform:scaleX(0.955);transform-origin:left">Basic</div><div class="t" style="left:406px;top:325.76px;font-size:16px;color:#111;font-weight:400;-webkit-text-stroke:0.25px #111;transform:scaleX(0.955);transform-origin:left">None</div><div class="t" style="left:-161px;width:800px;text-align:right;top:325.76px;font-size:16px;color:#111;font-weight:400;-webkit-text-stroke:0.25px #111;transform:scaleX(0.985);transform-origin:right">1321</div><div class="t" style="left:20px;width:800px;text-align:right;top:325.76px;font-size:16px;color:#111;font-weight:400;-webkit-text-stroke:0.25px #111;transform:scaleX(0.985);transform-origin:right">$3.00</div><div class="t" style="left:131.5px;width:800px;text-align:right;top:325.76px;font-size:16px;color:#111;font-weight:400;-webkit-text-stroke:0.25px #111;transform:scaleX(0.985);transform-origin:right">$20.00</div><div class="t" style="left:270.5px;width:800px;text-align:right;top:325.76px;font-size:16px;color:#111;font-weight:400;-webkit-text-stroke:0.25px #111;transform:scaleX(0.985);transform-origin:right">$26,420.00</div><div class="t" style="left:1089px;top:325.76px;font-size:16px;color:#111;font-weight:400;">$</div><div class="t" style="left:379px;width:800px;text-align:right;top:325.76px;font-size:16px;color:#111;font-weight:400;">-</div><div class="t" style="left:496.5px;width:800px;text-align:right;top:325.76px;font-size:16px;color:#111;font-weight:400;-webkit-text-stroke:0.25px #111;transform:scaleX(0.985);transform-origin:right">$26,420.00</div><div class="t" style="left:609.5px;width:800px;text-align:right;top:325.76px;font-size:16px;color:#111;font-weight:400;-webkit-text-stroke:0.25px #111;transform:scaleX(0.985);transform-origin:right">$13,210.00</div><div class="t" style="left:721.5px;width:800px;text-align:right;top:325.76px;font-size:16px;color:#111;font-weight:400;-webkit-text-stroke:0.25px #111;transform:scaleX(0.985);transform-origin:right">$13,210.00</div><div class="t" style="left:825px;width:800px;text-align:right;top:325.76px;font-size:16px;color:#111;font-weight:400;-webkit-text-stroke:0.25px #111;transform:scaleX(0.985);transform-origin:right">1/1/2024</div><div class="t" style="left:965px;width:800px;text-align:right;top:325.76px;font-size:16px;color:#111;font-weight:400;-webkit-text-stroke:0.25px #111;transform:scaleX(0.985);transform-origin:right">1</div><div class="r" style="left:56px;top:350px;width:1713px;height:35px;background:#d9e1f2"></div><div class="r" style="left:56px;top:384px;width:1713px;height:1px;background:#8fabdc"></div><div class="t" style="left:61.5px;top:360.76px;font-size:16px;color:#111;font-weight:400;-webkit-text-stroke:0.25px #111;transform:scaleX(0.955);transform-origin:left">Government</div><div class="t" style="left:179.5px;top:360.76px;font-size:16px;color:#111;font-weight:400;-webkit-text-stroke:0.25px #111;transform:scaleX(0.955);transform-origin:left">France</div><div class="t" style="left:302.5px;top:360.76px;font-size:16px;color:#111;font-weight:400;-webkit-text-stroke:0.25px #111;transform:scaleX(0.955);transform-origin:left">Basic</div><div class="t" style="left:406px;top:360.76px;font-size:16px;color:#111;font-weight:400;-webkit-text-stroke:0.25px #111;transform:scaleX(0.955);transform-origin:left">None</div><div class="t" style="left:-161px;width:800px;text-align:right;top:360.76px;font-size:16px;color:#111;font-weight:400;-webkit-text-stroke:0.25px #111;transform:scaleX(0.985);transform-origin:right">2178</div><div class="t" style="left:20px;width:800px;text-align:right;top:360.76px;font-size:16px;color:#111;font-weight:400;-webkit-text-stroke:0.25px #111;transform:scaleX(0.985);transform-origin:right">$3.00</div><div class="t" style="left:131.5px;width:800px;text-align:right;top:360.76px;font-size:16px;color:#111;font-weight:400;-webkit-text-stroke:0.25px #111;transform:scaleX(0.985);transform-origin:right">$15.00</div><div class="t" style="left:270.5px;width:800px;text-align:right;top:360.76px;font-size:16px;color:#111;font-weight:400;-webkit-text-stroke:0.25px #111;transform:scaleX(0.985);transform-origin:right">$32,670.00</div><div class="t" style="left:1089px;top:360.76px;font-size:16px;color:#111;font-weight:400;">$</div><div class="t" style="left:379px;width:800px;text-align:right;top:360.76px;font-size:16px;color:#111;font-weight:400;">-</div><div class="t" style="left:496.5px;width:800px;text-align:right;top:360.76px;font-size:16px;color:#111;font-weight:400;-webkit-text-stroke:0.25px #111;transform:scaleX(0.985);transform-origin:right">$32,670.00</div><div class="t" style="left:609.5px;width:800px;text-align:right;top:360.76px;font-size:16px;color:#111;font-weight:400;-webkit-text-stroke:0.25px #111;transform:scaleX(0.985);transform-origin:right">$21,780.00</div><div class="t" style="left:721.5px;width:800px;text-align:right;top:360.76px;font-size:16px;color:#111;font-weight:400;-webkit-text-stroke:0.25px #111;transform:scaleX(0.985);transform-origin:right">$10,890.00</div><div class="t" style="left:825px;width:800px;text-align:right;top:360.76px;font-size:16px;color:#111;font-weight:400;-webkit-text-stroke:0.25px #111;transform:scaleX(0.985);transform-origin:right">6/1/2024</div><div class="t" style="left:965px;width:800px;text-align:right;top:360.76px;font-size:16px;color:#111;font-weight:400;-webkit-text-stroke:0.25px #111;transform:scaleX(0.985);transform-origin:right">6</div><div class="r" style="left:56px;top:385px;width:1713px;height:35px;background:#fff"></div><div class="r" style="left:56px;top:419px;width:1713px;height:1px;background:#8fabdc"></div><div class="t" style="left:61.5px;top:395.76px;font-size:16px;color:#111;font-weight:400;-webkit-text-stroke:0.25px #111;transform:scaleX(0.955);transform-origin:left">Government</div><div class="t" style="left:179.5px;top:395.76px;font-size:16px;color:#111;font-weight:400;-webkit-text-stroke:0.25px #111;transform:scaleX(0.955);transform-origin:left">Germany</div><div class="t" style="left:302.5px;top:395.76px;font-size:16px;color:#111;font-weight:400;-webkit-text-stroke:0.25px #111;transform:scaleX(0.955);transform-origin:left">Basic</div><div class="t" style="left:406px;top:395.76px;font-size:16px;color:#111;font-weight:400;-webkit-text-stroke:0.25px #111;transform:scaleX(0.955);transform-origin:left">None</div><div class="t" style="left:-161px;width:800px;text-align:right;top:395.76px;font-size:16px;color:#111;font-weight:400;-webkit-text-stroke:0.25px #111;transform:scaleX(0.985);transform-origin:right">888</div><div class="t" style="left:20px;width:800px;text-align:right;top:395.76px;font-size:16px;color:#111;font-weight:400;-webkit-text-stroke:0.25px #111;transform:scaleX(0.985);transform-origin:right">$3.00</div><div class="t" style="left:131.5px;width:800px;text-align:right;top:395.76px;font-size:16px;color:#111;font-weight:400;-webkit-text-stroke:0.25px #111;transform:scaleX(0.985);transform-origin:right">$15.00</div><div class="t" style="left:270.5px;width:800px;text-align:right;top:395.76px;font-size:16px;color:#111;font-weight:400;-webkit-text-stroke:0.25px #111;transform:scaleX(0.985);transform-origin:right">$13,320.00</div><div class="t" style="left:1089px;top:395.76px;font-size:16px;color:#111;font-weight:400;">$</div><div class="t" style="left:379px;width:800px;text-align:right;top:395.76px;font-size:16px;color:#111;font-weight:400;">-</div><div class="t" style="left:496.5px;width:800px;text-align:right;top:395.76px;font-size:16px;color:#111;font-weight:400;-webkit-text-stroke:0.25px #111;transform:scaleX(0.985);transform-origin:right">$13,320.00</div><div class="t" style="left:609.5px;width:800px;text-align:right;top:395.76px;font-size:16px;color:#111;font-weight:400;-webkit-text-stroke:0.25px #111;transform:scaleX(0.985);transform-origin:right">$8,880.00</div><div class="t" style="left:721.5px;width:800px;text-align:right;top:395.76px;font-size:16px;color:#111;font-weight:400;-webkit-text-stroke:0.25px #111;transform:scaleX(0.985);transform-origin:right">$4,440.00</div><div class="t" style="left:825px;width:800px;text-align:right;top:395.76px;font-size:16px;color:#111;font-weight:400;-webkit-text-stroke:0.25px #111;transform:scaleX(0.985);transform-origin:right">6/1/2024</div><div class="t" style="left:965px;width:800px;text-align:right;top:395.76px;font-size:16px;color:#111;font-weight:400;-webkit-text-stroke:0.25px #111;transform:scaleX(0.985);transform-origin:right">6</div><div class="r" style="left:56px;top:420px;width:1713px;height:35px;background:#d9e1f2"></div><div class="r" style="left:56px;top:454px;width:1713px;height:1px;background:#8fabdc"></div><div class="t" style="left:61.5px;top:430.76px;font-size:16px;color:#111;font-weight:400;-webkit-text-stroke:0.25px #111;transform:scaleX(0.955);transform-origin:left">Government</div><div class="t" style="left:179.5px;top:430.76px;font-size:16px;color:#111;font-weight:400;-webkit-text-stroke:0.25px #111;transform:scaleX(0.955);transform-origin:left">Mexico</div><div class="t" style="left:302.5px;top:430.76px;font-size:16px;color:#111;font-weight:400;-webkit-text-stroke:0.25px #111;transform:scaleX(0.955);transform-origin:left">Basic</div><div class="t" style="left:406px;top:430.76px;font-size:16px;color:#111;font-weight:400;-webkit-text-stroke:0.25px #111;transform:scaleX(0.955);transform-origin:left">None</div><div class="t" style="left:-161px;width:800px;text-align:right;top:430.76px;font-size:16px;color:#111;font-weight:400;-webkit-text-stroke:0.25px #111;transform:scaleX(0.985);transform-origin:right">2470</div><div class="t" style="left:20px;width:800px;text-align:right;top:430.76px;font-size:16px;color:#111;font-weight:400;-webkit-text-stroke:0.25px #111;transform:scaleX(0.985);transform-origin:right">$3.00</div><div class="t" style="left:131.5px;width:800px;text-align:right;top:430.76px;font-size:16px;color:#111;font-weight:400;-webkit-text-stroke:0.25px #111;transform:scaleX(0.985);transform-origin:right">$15.00</div><div class="t" style="left:270.5px;width:800px;text-align:right;top:430.76px;font-size:16px;color:#111;font-weight:400;-webkit-text-stroke:0.25px #111;transform:scaleX(0.985);transform-origin:right">$37,050.00</div><div class="t" style="left:1089px;top:430.76px;font-size:16px;color:#111;font-weight:400;">$</div><div class="t" style="left:379px;width:800px;text-align:right;top:430.76px;font-size:16px;color:#111;font-weight:400;">-</div><div class="t" style="left:496.5px;width:800px;text-align:right;top:430.76px;font-size:16px;color:#111;font-weight:400;-webkit-text-stroke:0.25px #111;transform:scaleX(0.985);transform-origin:right">$37,050.00</div><div class="t" style="left:609.5px;width:800px;text-align:right;top:430.76px;font-size:16px;color:#111;font-weight:400;-webkit-text-stroke:0.25px #111;transform:scaleX(0.985);transform-origin:right">$24,700.00</div><div class="t" style="left:721.5px;width:800px;text-align:right;top:430.76px;font-size:16px;color:#111;font-weight:400;-webkit-text-stroke:0.25px #111;transform:scaleX(0.985);transform-origin:right">$12,350.00</div><div class="t" style="left:825px;width:800px;text-align:right;top:430.76px;font-size:16px;color:#111;font-weight:400;-webkit-text-stroke:0.25px #111;transform:scaleX(0.985);transform-origin:right">6/1/2024</div><div class="t" style="left:965px;width:800px;text-align:right;top:430.76px;font-size:16px;color:#111;font-weight:400;-webkit-text-stroke:0.25px #111;transform:scaleX(0.985);transform-origin:right">6</div><div class="r" style="left:56px;top:455px;width:1713px;height:35px;background:#fff"></div><div class="r" style="left:56px;top:489px;width:1713px;height:1px;background:#8fabdc"></div><div class="t" style="left:61.5px;top:465.76px;font-size:16px;color:#111;font-weight:400;-webkit-text-stroke:0.25px #111;transform:scaleX(0.955);transform-origin:left">Enterprise</div><div class="t" style="left:179.5px;top:465.76px;font-size:16px;color:#111;font-weight:400;-webkit-text-stroke:0.25px #111;transform:scaleX(0.955);transform-origin:left">Germany</div><div class="t" style="left:302.5px;top:465.76px;font-size:16px;color:#111;font-weight:400;-webkit-text-stroke:0.25px #111;transform:scaleX(0.955);transform-origin:left">Basic</div><div class="t" style="left:406px;top:465.76px;font-size:16px;color:#111;font-weight:400;-webkit-text-stroke:0.25px #111;transform:scaleX(0.955);transform-origin:left">None</div><div class="t" style="left:-161px;width:800px;text-align:right;top:465.76px;font-size:16px;color:#111;font-weight:400;-webkit-text-stroke:0.25px #111;transform:scaleX(0.985);transform-origin:right">1513</div><div class="t" style="left:20px;width:800px;text-align:right;top:465.76px;font-size:16px;color:#111;font-weight:400;-webkit-text-stroke:0.25px #111;transform:scaleX(0.985);transform-origin:right">$3.00</div><div class="t" style="left:131.5px;width:800px;text-align:right;top:465.76px;font-size:16px;color:#111;font-weight:400;-webkit-text-stroke:0.25px #111;transform:scaleX(0.985);transform-origin:right">$350.00</div><div class="t" style="left:270.5px;width:800px;text-align:right;top:465.76px;font-size:16px;color:#111;font-weight:400;-webkit-text-stroke:0.25px #111;transform:scaleX(0.985);transform-origin:right">$529,550.00</div><div class="t" style="left:1089px;top:465.76px;font-size:16px;color:#111;font-weight:400;">$</div><div class="t" style="left:379px;width:800px;text-align:right;top:465.76px;font-size:16px;color:#111;font-weight:400;">-</div><div class="t" style="left:496.5px;width:800px;text-align:right;top:465.76px;font-size:16px;color:#111;font-weight:400;-webkit-text-stroke:0.25px #111;transform:scaleX(0.985);transform-origin:right">$529,550.00</div><div class="t" style="left:609.5px;width:800px;text-align:right;top:465.76px;font-size:16px;color:#111;font-weight:400;-webkit-text-stroke:0.25px #111;transform:scaleX(0.985);transform-origin:right">$393,380.00</div><div class="t" style="left:721.5px;width:800px;text-align:right;top:465.76px;font-size:16px;color:#111;font-weight:400;-webkit-text-stroke:0.25px #111;transform:scaleX(0.985);transform-origin:right">$136,170.00</div><div class="t" style="left:825px;width:800px;text-align:right;top:465.76px;font-size:16px;color:#111;font-weight:400;-webkit-text-stroke:0.25px #111;transform:scaleX(0.985);transform-origin:right">12/1/2024</div><div class="t" style="left:965px;width:800px;text-align:right;top:465.76px;font-size:16px;color:#111;font-weight:400;-webkit-text-stroke:0.25px #111;transform:scaleX(0.985);transform-origin:right">12</div><div class="r" style="left:56px;top:490px;width:1713px;height:35px;background:#d9e1f2"></div><div class="r" style="left:56px;top:524px;width:1713px;height:1px;background:#8fabdc"></div><div class="t" style="left:61.5px;top:500.76px;font-size:16px;color:#111;font-weight:400;-webkit-text-stroke:0.25px #111;transform:scaleX(0.955);transform-origin:left">Government</div><div class="t" style="left:179.5px;top:500.76px;font-size:16px;color:#111;font-weight:400;-webkit-text-stroke:0.25px #111;transform:scaleX(0.955);transform-origin:left">Germany</div><div class="t" style="left:302.5px;top:500.76px;font-size:16px;color:#111;font-weight:400;-webkit-text-stroke:0.25px #111;transform:scaleX(0.955);transform-origin:left">Standard</div><div class="t" style="left:406px;top:500.76px;font-size:16px;color:#111;font-weight:400;-webkit-text-stroke:0.25px #111;transform:scaleX(0.955);transform-origin:left">None</div><div class="t" style="left:-161px;width:800px;text-align:right;top:500.76px;font-size:16px;color:#111;font-weight:400;-webkit-text-stroke:0.25px #111;transform:scaleX(0.985);transform-origin:right">921</div><div class="t" style="left:20px;width:800px;text-align:right;top:500.76px;font-size:16px;color:#111;font-weight:400;-webkit-text-stroke:0.25px #111;transform:scaleX(0.985);transform-origin:right">$5.00</div><div class="t" style="left:131.5px;width:800px;text-align:right;top:500.76px;font-size:16px;color:#111;font-weight:400;-webkit-text-stroke:0.25px #111;transform:scaleX(0.985);transform-origin:right">$15.00</div><div class="t" style="left:270.5px;width:800px;text-align:right;top:500.76px;font-size:16px;color:#111;font-weight:400;-webkit-text-stroke:0.25px #111;transform:scaleX(0.985);transform-origin:right">$13,815.00</div><div class="t" style="left:1089px;top:500.76px;font-size:16px;color:#111;font-weight:400;">$</div><div class="t" style="left:379px;width:800px;text-align:right;top:500.76px;font-size:16px;color:#111;font-weight:400;">-</div><div class="t" style="left:496.5px;width:800px;text-align:right;top:500.76px;font-size:16px;color:#111;font-weight:400;-webkit-text-stroke:0.25px #111;transform:scaleX(0.985);transform-origin:right">$13,815.00</div><div class="t" style="left:609.5px;width:800px;text-align:right;top:500.76px;font-size:16px;color:#111;font-weight:400;-webkit-text-stroke:0.25px #111;transform:scaleX(0.985);transform-origin:right">$9,210.00</div><div class="t" style="left:721.5px;width:800px;text-align:right;top:500.76px;font-size:16px;color:#111;font-weight:400;-webkit-text-stroke:0.25px #111;transform:scaleX(0.985);transform-origin:right">$4,605.00</div><div class="t" style="left:825px;width:800px;text-align:right;top:500.76px;font-size:16px;color:#111;font-weight:400;-webkit-text-stroke:0.25px #111;transform:scaleX(0.985);transform-origin:right">3/1/2024</div><div class="t" style="left:965px;width:800px;text-align:right;top:500.76px;font-size:16px;color:#111;font-weight:400;-webkit-text-stroke:0.25px #111;transform:scaleX(0.985);transform-origin:right">3</div><div class="r" style="left:56px;top:525px;width:1713px;height:35px;background:#fff"></div><div class="r" style="left:56px;top:559px;width:1713px;height:1px;background:#8fabdc"></div><div class="t" style="left:61.5px;top:535.76px;font-size:16px;color:#111;font-weight:400;-webkit-text-stroke:0.25px #111;transform:scaleX(0.955);transform-origin:left">SMB</div><div class="t" style="left:179.5px;top:535.76px;font-size:16px;color:#111;font-weight:400;-webkit-text-stroke:0.25px #111;transform:scaleX(0.955);transform-origin:left">Canada</div><div class="t" style="left:302.5px;top:535.76px;font-size:16px;color:#111;font-weight:400;-webkit-text-stroke:0.25px #111;transform:scaleX(0.955);transform-origin:left">Standard</div><div class="t" style="left:406px;top:535.76px;font-size:16px;color:#111;font-weight:400;-webkit-text-stroke:0.25px #111;transform:scaleX(0.955);transform-origin:left">None</div><div class="t" style="left:-161px;width:800px;text-align:right;top:535.76px;font-size:16px;color:#111;font-weight:400;-webkit-text-stroke:0.25px #111;transform:scaleX(0.985);transform-origin:right">2518</div><div class="t" style="left:20px;width:800px;text-align:right;top:535.76px;font-size:16px;color:#111;font-weight:400;-webkit-text-stroke:0.25px #111;transform:scaleX(0.985);transform-origin:right">$5.00</div><div class="t" style="left:131.5px;width:800px;text-align:right;top:535.76px;font-size:16px;color:#111;font-weight:400;-webkit-text-stroke:0.25px #111;transform:scaleX(0.985);transform-origin:right">$12.00</div><div class="t" style="left:270.5px;width:800px;text-align:right;top:535.76px;font-size:16px;color:#111;font-weight:400;-webkit-text-stroke:0.25px #111;transform:scaleX(0.985);transform-origin:right">$30,216.00</div><div class="t" style="left:1089px;top:535.76px;font-size:16px;color:#111;font-weight:400;">$</div><div class="t" style="left:379px;width:800px;text-align:right;top:535.76px;font-size:16px;color:#111;font-weight:400;">-</div><div class="t" style="left:496.5px;width:800px;text-align:right;top:535.76px;font-size:16px;color:#111;font-weight:400;-webkit-text-stroke:0.25px #111;transform:scaleX(0.985);transform-origin:right">$30,216.00</div><div class="t" style="left:609.5px;width:800px;text-align:right;top:535.76px;font-size:16px;color:#111;font-weight:400;-webkit-text-stroke:0.25px #111;transform:scaleX(0.985);transform-origin:right">$7,554.00</div><div class="t" style="left:721.5px;width:800px;text-align:right;top:535.76px;font-size:16px;color:#111;font-weight:400;-webkit-text-stroke:0.25px #111;transform:scaleX(0.985);transform-origin:right">$22,662.00</div><div class="t" style="left:825px;width:800px;text-align:right;top:535.76px;font-size:16px;color:#111;font-weight:400;-webkit-text-stroke:0.25px #111;transform:scaleX(0.985);transform-origin:right">6/1/2024</div><div class="t" style="left:965px;width:800px;text-align:right;top:535.76px;font-size:16px;color:#111;font-weight:400;-webkit-text-stroke:0.25px #111;transform:scaleX(0.985);transform-origin:right">6</div><div class="r" style="left:56px;top:560px;width:1713px;height:35px;background:#d9e1f2"></div><div class="r" style="left:56px;top:594px;width:1713px;height:1px;background:#8fabdc"></div><div class="t" style="left:61.5px;top:570.76px;font-size:16px;color:#111;font-weight:400;-webkit-text-stroke:0.25px #111;transform:scaleX(0.955);transform-origin:left">Enterprise</div><div class="t" style="left:179.5px;top:570.76px;font-size:16px;color:#111;font-weight:400;-webkit-text-stroke:0.25px #111;transform:scaleX(0.955);transform-origin:left">France</div><div class="t" style="left:302.5px;top:570.76px;font-size:16px;color:#111;font-weight:400;-webkit-text-stroke:0.25px #111;transform:scaleX(0.955);transform-origin:left">Standard</div><div class="t" style="left:406px;top:570.76px;font-size:16px;color:#111;font-weight:400;-webkit-text-stroke:0.25px #111;transform:scaleX(0.955);transform-origin:left">None</div><div class="t" style="left:-161px;width:800px;text-align:right;top:570.76px;font-size:16px;color:#111;font-weight:400;-webkit-text-stroke:0.25px #111;transform:scaleX(0.985);transform-origin:right">1899</div><div class="t" style="left:20px;width:800px;text-align:right;top:570.76px;font-size:16px;color:#111;font-weight:400;-webkit-text-stroke:0.25px #111;transform:scaleX(0.985);transform-origin:right">$5.00</div><div class="t" style="left:131.5px;width:800px;text-align:right;top:570.76px;font-size:16px;color:#111;font-weight:400;-webkit-text-stroke:0.25px #111;transform:scaleX(0.985);transform-origin:right">$20.00</div><div class="t" style="left:270.5px;width:800px;text-align:right;top:570.76px;font-size:16px;color:#111;font-weight:400;-webkit-text-stroke:0.25px #111;transform:scaleX(0.985);transform-origin:right">$37,980.00</div><div class="t" style="left:1089px;top:570.76px;font-size:16px;color:#111;font-weight:400;">$</div><div class="t" style="left:379px;width:800px;text-align:right;top:570.76px;font-size:16px;color:#111;font-weight:400;">-</div><div class="t" style="left:496.5px;width:800px;text-align:right;top:570.76px;font-size:16px;color:#111;font-weight:400;-webkit-text-stroke:0.25px #111;transform:scaleX(0.985);transform-origin:right">$37,980.00</div><div class="t" style="left:609.5px;width:800px;text-align:right;top:570.76px;font-size:16px;color:#111;font-weight:400;-webkit-text-stroke:0.25px #111;transform:scaleX(0.985);transform-origin:right">$18,990.00</div><div class="t" style="left:721.5px;width:800px;text-align:right;top:570.76px;font-size:16px;color:#111;font-weight:400;-webkit-text-stroke:0.25px #111;transform:scaleX(0.985);transform-origin:right">$18,990.00</div><div class="t" style="left:825px;width:800px;text-align:right;top:570.76px;font-size:16px;color:#111;font-weight:400;-webkit-text-stroke:0.25px #111;transform:scaleX(0.985);transform-origin:right">6/1/2024</div><div class="t" style="left:965px;width:800px;text-align:right;top:570.76px;font-size:16px;color:#111;font-weight:400;-webkit-text-stroke:0.25px #111;transform:scaleX(0.985);transform-origin:right">6</div><div class="r" style="left:56px;top:595px;width:1713px;height:35px;background:#fff"></div><div class="r" style="left:56px;top:629px;width:1713px;height:1px;background:#8fabdc"></div><div class="t" style="left:61.5px;top:605.76px;font-size:16px;color:#111;font-weight:400;-webkit-text-stroke:0.25px #111;transform:scaleX(0.955);transform-origin:left">SMB</div><div class="t" style="left:179.5px;top:605.76px;font-size:16px;color:#111;font-weight:400;-webkit-text-stroke:0.25px #111;transform:scaleX(0.955);transform-origin:left">Germany</div><div class="t" style="left:302.5px;top:605.76px;font-size:16px;color:#111;font-weight:400;-webkit-text-stroke:0.25px #111;transform:scaleX(0.955);transform-origin:left">Standard</div><div class="t" style="left:406px;top:605.76px;font-size:16px;color:#111;font-weight:400;-webkit-text-stroke:0.25px #111;transform:scaleX(0.955);transform-origin:left">None</div><div class="t" style="left:-161px;width:800px;text-align:right;top:605.76px;font-size:16px;color:#111;font-weight:400;-webkit-text-stroke:0.25px #111;transform:scaleX(0.985);transform-origin:right">1545</div><div class="t" style="left:20px;width:800px;text-align:right;top:605.76px;font-size:16px;color:#111;font-weight:400;-webkit-text-stroke:0.25px #111;transform:scaleX(0.985);transform-origin:right">$5.00</div><div class="t" style="left:131.5px;width:800px;text-align:right;top:605.76px;font-size:16px;color:#111;font-weight:400;-webkit-text-stroke:0.25px #111;transform:scaleX(0.985);transform-origin:right">$12.00</div><div class="t" style="left:270.5px;width:800px;text-align:right;top:605.76px;font-size:16px;color:#111;font-weight:400;-webkit-text-stroke:0.25px #111;transform:scaleX(0.985);transform-origin:right">$18,540.00</div><div class="t" style="left:1089px;top:605.76px;font-size:16px;color:#111;font-weight:400;">$</div><div class="t" style="left:379px;width:800px;text-align:right;top:605.76px;font-size:16px;color:#111;font-weight:400;">-</div><div class="t" style="left:496.5px;width:800px;text-align:right;top:605.76px;font-size:16px;color:#111;font-weight:400;-webkit-text-stroke:0.25px #111;transform:scaleX(0.985);transform-origin:right">$18,540.00</div><div class="t" style="left:609.5px;width:800px;text-align:right;top:605.76px;font-size:16px;color:#111;font-weight:400;-webkit-text-stroke:0.25px #111;transform:scaleX(0.985);transform-origin:right">$4,635.00</div><div class="t" style="left:721.5px;width:800px;text-align:right;top:605.76px;font-size:16px;color:#111;font-weight:400;-webkit-text-stroke:0.25px #111;transform:scaleX(0.985);transform-origin:right">$13,905.00</div><div class="t" style="left:825px;width:800px;text-align:right;top:605.76px;font-size:16px;color:#111;font-weight:400;-webkit-text-stroke:0.25px #111;transform:scaleX(0.985);transform-origin:right">6/1/2024</div><div class="t" style="left:965px;width:800px;text-align:right;top:605.76px;font-size:16px;color:#111;font-weight:400;-webkit-text-stroke:0.25px #111;transform:scaleX(0.985);transform-origin:right">6</div><div class="r" style="left:56px;top:630px;width:1713px;height:35px;background:#d9e1f2"></div><div class="r" style="left:56px;top:664px;width:1713px;height:1px;background:#8fabdc"></div><div class="t" style="left:61.5px;top:640.76px;font-size:16px;color:#111;font-weight:400;-webkit-text-stroke:0.25px #111;transform:scaleX(0.955);transform-origin:left">Government</div><div class="t" style="left:179.5px;top:640.76px;font-size:16px;color:#111;font-weight:400;-webkit-text-stroke:0.25px #111;transform:scaleX(0.955);transform-origin:left">Mexico</div><div class="t" style="left:302.5px;top:640.76px;font-size:16px;color:#111;font-weight:400;-webkit-text-stroke:0.25px #111;transform:scaleX(0.955);transform-origin:left">Standard</div><div class="t" style="left:406px;top:640.76px;font-size:16px;color:#111;font-weight:400;-webkit-text-stroke:0.25px #111;transform:scaleX(0.955);transform-origin:left">None</div><div class="t" style="left:-161px;width:800px;text-align:right;top:640.76px;font-size:16px;color:#111;font-weight:400;-webkit-text-stroke:0.25px #111;transform:scaleX(0.985);transform-origin:right">2470</div><div class="t" style="left:20px;width:800px;text-align:right;top:640.76px;font-size:16px;color:#111;font-weight:400;-webkit-text-stroke:0.25px #111;transform:scaleX(0.985);transform-origin:right">$5.00</div><div class="t" style="left:131.5px;width:800px;text-align:right;top:640.76px;font-size:16px;color:#111;font-weight:400;-webkit-text-stroke:0.25px #111;transform:scaleX(0.985);transform-origin:right">$15.00</div><div class="t" style="left:270.5px;width:800px;text-align:right;top:640.76px;font-size:16px;color:#111;font-weight:400;-webkit-text-stroke:0.25px #111;transform:scaleX(0.985);transform-origin:right">$37,050.00</div><div class="t" style="left:1089px;top:640.76px;font-size:16px;color:#111;font-weight:400;">$</div><div class="t" style="left:379px;width:800px;text-align:right;top:640.76px;font-size:16px;color:#111;font-weight:400;">-</div><div class="t" style="left:496.5px;width:800px;text-align:right;top:640.76px;font-size:16px;color:#111;font-weight:400;-webkit-text-stroke:0.25px #111;transform:scaleX(0.985);transform-origin:right">$37,050.00</div><div class="t" style="left:609.5px;width:800px;text-align:right;top:640.76px;font-size:16px;color:#111;font-weight:400;-webkit-text-stroke:0.25px #111;transform:scaleX(0.985);transform-origin:right">$24,700.00</div><div class="t" style="left:721.5px;width:800px;text-align:right;top:640.76px;font-size:16px;color:#111;font-weight:400;-webkit-text-stroke:0.25px #111;transform:scaleX(0.985);transform-origin:right">$12,350.00</div><div class="t" style="left:825px;width:800px;text-align:right;top:640.76px;font-size:16px;color:#111;font-weight:400;-webkit-text-stroke:0.25px #111;transform:scaleX(0.985);transform-origin:right">6/1/2024</div><div class="t" style="left:965px;width:800px;text-align:right;top:640.76px;font-size:16px;color:#111;font-weight:400;-webkit-text-stroke:0.25px #111;transform:scaleX(0.985);transform-origin:right">6</div><div class="r" style="left:56px;top:665px;width:1713px;height:35px;background:#fff"></div><div class="r" style="left:56px;top:699px;width:1713px;height:1px;background:#8fabdc"></div><div class="t" style="left:61.5px;top:675.76px;font-size:16px;color:#111;font-weight:400;-webkit-text-stroke:0.25px #111;transform:scaleX(0.955);transform-origin:left">Education</div><div class="t" style="left:179.5px;top:675.76px;font-size:16px;color:#111;font-weight:400;-webkit-text-stroke:0.25px #111;transform:scaleX(0.955);transform-origin:left">Canada</div><div class="t" style="left:302.5px;top:675.76px;font-size:16px;color:#111;font-weight:400;-webkit-text-stroke:0.25px #111;transform:scaleX(0.955);transform-origin:left">Standard</div><div class="t" style="left:406px;top:675.76px;font-size:16px;color:#111;font-weight:400;-webkit-text-stroke:0.25px #111;transform:scaleX(0.955);transform-origin:left">None</div><div class="t" style="left:-161px;width:800px;text-align:right;top:675.76px;font-size:16px;color:#111;font-weight:400;-webkit-text-stroke:0.25px #111;transform:scaleX(0.985);transform-origin:right">2665.5</div><div class="t" style="left:20px;width:800px;text-align:right;top:675.76px;font-size:16px;color:#111;font-weight:400;-webkit-text-stroke:0.25px #111;transform:scaleX(0.985);transform-origin:right">$5.00</div><div class="t" style="left:131.5px;width:800px;text-align:right;top:675.76px;font-size:16px;color:#111;font-weight:400;-webkit-text-stroke:0.25px #111;transform:scaleX(0.985);transform-origin:right">$125.00</div><div class="t" style="left:270.5px;width:800px;text-align:right;top:675.76px;font-size:16px;color:#111;font-weight:400;-webkit-text-stroke:0.25px #111;transform:scaleX(0.985);transform-origin:right">$333,187.50</div><div class="t" style="left:1089px;top:675.76px;font-size:16px;color:#111;font-weight:400;">$</div><div class="t" style="left:379px;width:800px;text-align:right;top:675.76px;font-size:16px;color:#111;font-weight:400;">-</div><div class="t" style="left:496.5px;width:800px;text-align:right;top:675.76px;font-size:16px;color:#111;font-weight:400;-webkit-text-stroke:0.25px #111;transform:scaleX(0.985);transform-origin:right">$333,187.50</div><div class="t" style="left:609.5px;width:800px;text-align:right;top:675.76px;font-size:16px;color:#111;font-weight:400;-webkit-text-stroke:0.25px #111;transform:scaleX(0.985);transform-origin:right">$319,860.00</div><div class="t" style="left:721.5px;width:800px;text-align:right;top:675.76px;font-size:16px;color:#111;font-weight:400;-webkit-text-stroke:0.25px #111;transform:scaleX(0.985);transform-origin:right">$13,327.50</div><div class="t" style="left:825px;width:800px;text-align:right;top:675.76px;font-size:16px;color:#111;font-weight:400;-webkit-text-stroke:0.25px #111;transform:scaleX(0.985);transform-origin:right">7/1/2024</div><div class="t" style="left:965px;width:800px;text-align:right;top:675.76px;font-size:16px;color:#111;font-weight:400;-webkit-text-stroke:0.25px #111;transform:scaleX(0.985);transform-origin:right">7</div><div class="r" style="left:56px;top:700px;width:1713px;height:35px;background:#d9e1f2"></div><div class="r" style="left:56px;top:734px;width:1713px;height:1px;background:#8fabdc"></div><div class="t" style="left:61.5px;top:710.76px;font-size:16px;color:#111;font-weight:400;-webkit-text-stroke:0.25px #111;transform:scaleX(0.955);transform-origin:left">Consumer</div><div class="t" style="left:179.5px;top:710.76px;font-size:16px;color:#111;font-weight:400;-webkit-text-stroke:0.25px #111;transform:scaleX(0.955);transform-origin:left">Mexico</div><div class="t" style="left:302.5px;top:710.76px;font-size:16px;color:#111;font-weight:400;-webkit-text-stroke:0.25px #111;transform:scaleX(0.955);transform-origin:left">Standard</div><div class="t" style="left:406px;top:710.76px;font-size:16px;color:#111;font-weight:400;-webkit-text-stroke:0.25px #111;transform:scaleX(0.955);transform-origin:left">None</div><div class="t" style="left:-161px;width:800px;text-align:right;top:710.76px;font-size:16px;color:#111;font-weight:400;-webkit-text-stroke:0.25px #111;transform:scaleX(0.985);transform-origin:right">958</div><div class="t" style="left:20px;width:800px;text-align:right;top:710.76px;font-size:16px;color:#111;font-weight:400;-webkit-text-stroke:0.25px #111;transform:scaleX(0.985);transform-origin:right">$5.00</div><div class="t" style="left:131.5px;width:800px;text-align:right;top:710.76px;font-size:16px;color:#111;font-weight:400;-webkit-text-stroke:0.25px #111;transform:scaleX(0.985);transform-origin:right">$300.00</div><div class="t" style="left:270.5px;width:800px;text-align:right;top:710.76px;font-size:16px;color:#111;font-weight:400;-webkit-text-stroke:0.25px #111;transform:scaleX(0.985);transform-origin:right">$287,400.00</div><div class="t" style="left:1089px;top:710.76px;font-size:16px;color:#111;font-weight:400;">$</div><div class="t" style="left:379px;width:800px;text-align:right;top:710.76px;font-size:16px;color:#111;font-weight:400;">-</div><div class="t" style="left:496.5px;width:800px;text-align:right;top:710.76px;font-size:16px;color:#111;font-weight:400;-webkit-text-stroke:0.25px #111;transform:scaleX(0.985);transform-origin:right">$287,400.00</div><div class="t" style="left:609.5px;width:800px;text-align:right;top:710.76px;font-size:16px;color:#111;font-weight:400;-webkit-text-stroke:0.25px #111;transform:scaleX(0.985);transform-origin:right">$239,500.00</div><div class="t" style="left:721.5px;width:800px;text-align:right;top:710.76px;font-size:16px;color:#111;font-weight:400;-webkit-text-stroke:0.25px #111;transform:scaleX(0.985);transform-origin:right">$47,900.00</div><div class="t" style="left:825px;width:800px;text-align:right;top:710.76px;font-size:16px;color:#111;font-weight:400;-webkit-text-stroke:0.25px #111;transform:scaleX(0.985);transform-origin:right">8/1/2024</div><div class="t" style="left:965px;width:800px;text-align:right;top:710.76px;font-size:16px;color:#111;font-weight:400;-webkit-text-stroke:0.25px #111;transform:scaleX(0.985);transform-origin:right">8</div><div class="r" style="left:56px;top:735px;width:1713px;height:35px;background:#fff"></div><div class="r" style="left:56px;top:769px;width:1713px;height:1px;background:#8fabdc"></div><div class="t" style="left:61.5px;top:745.76px;font-size:16px;color:#111;font-weight:400;-webkit-text-stroke:0.25px #111;transform:scaleX(0.955);transform-origin:left">Enterprise</div><div class="t" style="left:179.5px;top:745.76px;font-size:16px;color:#111;font-weight:400;-webkit-text-stroke:0.25px #111;transform:scaleX(0.955);transform-origin:left">Germany</div><div class="t" style="left:302.5px;top:745.76px;font-size:16px;color:#111;font-weight:400;-webkit-text-stroke:0.25px #111;transform:scaleX(0.955);transform-origin:left">Standard</div><div class="t" style="left:406px;top:745.76px;font-size:16px;color:#111;font-weight:400;-webkit-text-stroke:0.25px #111;transform:scaleX(0.955);transform-origin:left">None</div><div class="t" style="left:-161px;width:800px;text-align:right;top:745.76px;font-size:16px;color:#111;font-weight:400;-webkit-text-stroke:0.25px #111;transform:scaleX(0.985);transform-origin:right">2146</div><div class="t" style="left:20px;width:800px;text-align:right;top:745.76px;font-size:16px;color:#111;font-weight:400;-webkit-text-stroke:0.25px #111;transform:scaleX(0.985);transform-origin:right">$5.00</div><div class="t" style="left:131.5px;width:800px;text-align:right;top:745.76px;font-size:16px;color:#111;font-weight:400;-webkit-text-stroke:0.25px #111;transform:scaleX(0.985);transform-origin:right">$7.00</div><div class="t" style="left:270.5px;width:800px;text-align:right;top:745.76px;font-size:16px;color:#111;font-weight:400;-webkit-text-stroke:0.25px #111;transform:scaleX(0.985);transform-origin:right">$15,022.00</div><div class="t" style="left:1089px;top:745.76px;font-size:16px;color:#111;font-weight:400;">$</div><div class="t" style="left:379px;width:800px;text-align:right;top:745.76px;font-size:16px;color:#111;font-weight:400;">-</div><div class="t" style="left:496.5px;width:800px;text-align:right;top:745.76px;font-size:16px;color:#111;font-weight:400;-webkit-text-stroke:0.25px #111;transform:scaleX(0.985);transform-origin:right">$15,022.00</div><div class="t" style="left:609.5px;width:800px;text-align:right;top:745.76px;font-size:16px;color:#111;font-weight:400;-webkit-text-stroke:0.25px #111;transform:scaleX(0.985);transform-origin:right">$10,730.00</div><div class="t" style="left:721.5px;width:800px;text-align:right;top:745.76px;font-size:16px;color:#111;font-weight:400;-webkit-text-stroke:0.25px #111;transform:scaleX(0.985);transform-origin:right">$4,292.00</div><div class="t" style="left:825px;width:800px;text-align:right;top:745.76px;font-size:16px;color:#111;font-weight:400;-webkit-text-stroke:0.25px #111;transform:scaleX(0.985);transform-origin:right">9/1/2024</div><div class="t" style="left:965px;width:800px;text-align:right;top:745.76px;font-size:16px;color:#111;font-weight:400;-webkit-text-stroke:0.25px #111;transform:scaleX(0.985);transform-origin:right">9</div><div class="r" style="left:56px;top:770px;width:1713px;height:35px;background:#d9e1f2"></div><div class="r" style="left:56px;top:804px;width:1713px;height:1px;background:#8fabdc"></div><div class="t" style="left:61.5px;top:780.76px;font-size:16px;color:#111;font-weight:400;-webkit-text-stroke:0.25px #111;transform:scaleX(0.955);transform-origin:left">Education</div><div class="t" style="left:179.5px;top:780.76px;font-size:16px;color:#111;font-weight:400;-webkit-text-stroke:0.25px #111;transform:scaleX(0.955);transform-origin:left">Canada</div><div class="t" style="left:302.5px;top:780.76px;font-size:16px;color:#111;font-weight:400;-webkit-text-stroke:0.25px #111;transform:scaleX(0.955);transform-origin:left">Standard</div><div class="t" style="left:406px;top:780.76px;font-size:16px;color:#111;font-weight:400;-webkit-text-stroke:0.25px #111;transform:scaleX(0.955);transform-origin:left">None</div><div class="t" style="left:-161px;width:800px;text-align:right;top:780.76px;font-size:16px;color:#111;font-weight:400;-webkit-text-stroke:0.25px #111;transform:scaleX(0.985);transform-origin:right">345</div><div class="t" style="left:20px;width:800px;text-align:right;top:780.76px;font-size:16px;color:#111;font-weight:400;-webkit-text-stroke:0.25px #111;transform:scaleX(0.985);transform-origin:right">$5.00</div><div class="t" style="left:131.5px;width:800px;text-align:right;top:780.76px;font-size:16px;color:#111;font-weight:400;-webkit-text-stroke:0.25px #111;transform:scaleX(0.985);transform-origin:right">$125.00</div><div class="t" style="left:270.5px;width:800px;text-align:right;top:780.76px;font-size:16px;color:#111;font-weight:400;-webkit-text-stroke:0.25px #111;transform:scaleX(0.985);transform-origin:right">$43,125.00</div><div class="t" style="left:1089px;top:780.76px;font-size:16px;color:#111;font-weight:400;">$</div><div class="t" style="left:379px;width:800px;text-align:right;top:780.76px;font-size:16px;color:#111;font-weight:400;">-</div><div class="t" style="left:496.5px;width:800px;text-align:right;top:780.76px;font-size:16px;color:#111;font-weight:400;-webkit-text-stroke:0.25px #111;transform:scaleX(0.985);transform-origin:right">$43,125.00</div><div class="t" style="left:609.5px;width:800px;text-align:right;top:780.76px;font-size:16px;color:#111;font-weight:400;-webkit-text-stroke:0.25px #111;transform:scaleX(0.985);transform-origin:right">$41,400.00</div><div class="t" style="left:721.5px;width:800px;text-align:right;top:780.76px;font-size:16px;color:#111;font-weight:400;-webkit-text-stroke:0.25px #111;transform:scaleX(0.985);transform-origin:right">$1,725.00</div><div class="t" style="left:825px;width:800px;text-align:right;top:780.76px;font-size:16px;color:#111;font-weight:400;-webkit-text-stroke:0.25px #111;transform:scaleX(0.985);transform-origin:right">10/1/2023</div><div class="t" style="left:965px;width:800px;text-align:right;top:780.76px;font-size:16px;color:#111;font-weight:400;-webkit-text-stroke:0.25px #111;transform:scaleX(0.985);transform-origin:right">10</div><div class="r" style="left:56px;top:805px;width:1713px;height:35px;background:#fff"></div><div class="r" style="left:56px;top:839px;width:1713px;height:1px;background:#8fabdc"></div><div class="t" style="left:61.5px;top:815.76px;font-size:16px;color:#111;font-weight:400;-webkit-text-stroke:0.25px #111;transform:scaleX(0.955);transform-origin:left">Government</div><div class="t" style="left:179.5px;top:815.76px;font-size:16px;color:#111;font-weight:400;-webkit-text-stroke:0.25px #111;transform:scaleX(0.955);transform-origin:left">United States</div><div class="t" style="left:302.5px;top:815.76px;font-size:16px;color:#111;font-weight:400;-webkit-text-stroke:0.25px #111;transform:scaleX(0.955);transform-origin:left">Standard</div><div class="t" style="left:406px;top:815.76px;font-size:16px;color:#111;font-weight:400;-webkit-text-stroke:0.25px #111;transform:scaleX(0.955);transform-origin:left">None</div><div class="t" style="left:-161px;width:800px;text-align:right;top:815.76px;font-size:16px;color:#111;font-weight:400;-webkit-text-stroke:0.25px #111;transform:scaleX(0.985);transform-origin:right">615</div><div class="t" style="left:20px;width:800px;text-align:right;top:815.76px;font-size:16px;color:#111;font-weight:400;-webkit-text-stroke:0.25px #111;transform:scaleX(0.985);transform-origin:right">$5.00</div><div class="t" style="left:131.5px;width:800px;text-align:right;top:815.76px;font-size:16px;color:#111;font-weight:400;-webkit-text-stroke:0.25px #111;transform:scaleX(0.985);transform-origin:right">$15.00</div><div class="t" style="left:270.5px;width:800px;text-align:right;top:815.76px;font-size:16px;color:#111;font-weight:400;-webkit-text-stroke:0.25px #111;transform:scaleX(0.985);transform-origin:right">$9,225.00</div><div class="t" style="left:1089px;top:815.76px;font-size:16px;color:#111;font-weight:400;">$</div><div class="t" style="left:379px;width:800px;text-align:right;top:815.76px;font-size:16px;color:#111;font-weight:400;">-</div><div class="t" style="left:496.5px;width:800px;text-align:right;top:815.76px;font-size:16px;color:#111;font-weight:400;-webkit-text-stroke:0.25px #111;transform:scaleX(0.985);transform-origin:right">$9,225.00</div><div class="t" style="left:609.5px;width:800px;text-align:right;top:815.76px;font-size:16px;color:#111;font-weight:400;-webkit-text-stroke:0.25px #111;transform:scaleX(0.985);transform-origin:right">$6,150.00</div><div class="t" style="left:721.5px;width:800px;text-align:right;top:815.76px;font-size:16px;color:#111;font-weight:400;-webkit-text-stroke:0.25px #111;transform:scaleX(0.985);transform-origin:right">$3,075.00</div><div class="t" style="left:825px;width:800px;text-align:right;top:815.76px;font-size:16px;color:#111;font-weight:400;-webkit-text-stroke:0.25px #111;transform:scaleX(0.985);transform-origin:right">12/1/2024</div><div class="t" style="left:965px;width:800px;text-align:right;top:815.76px;font-size:16px;color:#111;font-weight:400;-webkit-text-stroke:0.25px #111;transform:scaleX(0.985);transform-origin:right">12</div><div class="r" style="left:56px;top:840px;width:1713px;height:35px;background:#d9e1f2"></div><div class="r" style="left:56px;top:874px;width:1713px;height:1px;background:#8fabdc"></div><div class="t" style="left:61.5px;top:850.76px;font-size:16px;color:#111;font-weight:400;-webkit-text-stroke:0.25px #111;transform:scaleX(0.955);transform-origin:left">Enterprise</div><div class="t" style="left:179.5px;top:850.76px;font-size:16px;color:#111;font-weight:400;-webkit-text-stroke:0.25px #111;transform:scaleX(0.955);transform-origin:left">Canada</div><div class="t" style="left:302.5px;top:850.76px;font-size:16px;color:#111;font-weight:400;-webkit-text-stroke:0.25px #111;transform:scaleX(0.955);transform-origin:left">Premium</div><div class="t" style="left:406px;top:850.76px;font-size:16px;color:#111;font-weight:400;-webkit-text-stroke:0.25px #111;transform:scaleX(0.955);transform-origin:left">None</div><div class="t" style="left:-161px;width:800px;text-align:right;top:850.76px;font-size:16px;color:#111;font-weight:400;-webkit-text-stroke:0.25px #111;transform:scaleX(0.985);transform-origin:right">292</div><div class="t" style="left:20px;width:800px;text-align:right;top:850.76px;font-size:16px;color:#111;font-weight:400;-webkit-text-stroke:0.25px #111;transform:scaleX(0.985);transform-origin:right">$10.00</div><div class="t" style="left:131.5px;width:800px;text-align:right;top:850.76px;font-size:16px;color:#111;font-weight:400;-webkit-text-stroke:0.25px #111;transform:scaleX(0.985);transform-origin:right">$20.00</div><div class="t" style="left:270.5px;width:800px;text-align:right;top:850.76px;font-size:16px;color:#111;font-weight:400;-webkit-text-stroke:0.25px #111;transform:scaleX(0.985);transform-origin:right">$5,840.00</div><div class="t" style="left:1089px;top:850.76px;font-size:16px;color:#111;font-weight:400;">$</div><div class="t" style="left:379px;width:800px;text-align:right;top:850.76px;font-size:16px;color:#111;font-weight:400;">-</div><div class="t" style="left:496.5px;width:800px;text-align:right;top:850.76px;font-size:16px;color:#111;font-weight:400;-webkit-text-stroke:0.25px #111;transform:scaleX(0.985);transform-origin:right">$5,840.00</div><div class="t" style="left:609.5px;width:800px;text-align:right;top:850.76px;font-size:16px;color:#111;font-weight:400;-webkit-text-stroke:0.25px #111;transform:scaleX(0.985);transform-origin:right">$2,920.00</div><div class="t" style="left:721.5px;width:800px;text-align:right;top:850.76px;font-size:16px;color:#111;font-weight:400;-webkit-text-stroke:0.25px #111;transform:scaleX(0.985);transform-origin:right">$2,920.00</div><div class="t" style="left:825px;width:800px;text-align:right;top:850.76px;font-size:16px;color:#111;font-weight:400;-webkit-text-stroke:0.25px #111;transform:scaleX(0.985);transform-origin:right">2/1/2024</div><div class="t" style="left:965px;width:800px;text-align:right;top:850.76px;font-size:16px;color:#111;font-weight:400;-webkit-text-stroke:0.25px #111;transform:scaleX(0.985);transform-origin:right">2</div><div class="r" style="left:56px;top:875px;width:1713px;height:35px;background:#fff"></div><div class="r" style="left:56px;top:909px;width:1713px;height:1px;background:#8fabdc"></div><div class="t" style="left:61.5px;top:885.76px;font-size:16px;color:#111;font-weight:400;-webkit-text-stroke:0.25px #111;transform:scaleX(0.955);transform-origin:left">Government</div><div class="t" style="left:179.5px;top:885.76px;font-size:16px;color:#111;font-weight:400;-webkit-text-stroke:0.25px #111;transform:scaleX(0.955);transform-origin:left">Mexico</div><div class="t" style="left:302.5px;top:885.76px;font-size:16px;color:#111;font-weight:400;-webkit-text-stroke:0.25px #111;transform:scaleX(0.955);transform-origin:left">Premium</div><div class="t" style="left:406px;top:885.76px;font-size:16px;color:#111;font-weight:400;-webkit-text-stroke:0.25px #111;transform:scaleX(0.955);transform-origin:left">None</div><div class="t" style="left:-161px;width:800px;text-align:right;top:885.76px;font-size:16px;color:#111;font-weight:400;-webkit-text-stroke:0.25px #111;transform:scaleX(0.985);transform-origin:right">974</div><div class="t" style="left:20px;width:800px;text-align:right;top:885.76px;font-size:16px;color:#111;font-weight:400;-webkit-text-stroke:0.25px #111;transform:scaleX(0.985);transform-origin:right">$10.00</div><div class="t" style="left:131.5px;width:800px;text-align:right;top:885.76px;font-size:16px;color:#111;font-weight:400;-webkit-text-stroke:0.25px #111;transform:scaleX(0.985);transform-origin:right">$15.00</div><div class="t" style="left:270.5px;width:800px;text-align:right;top:885.76px;font-size:16px;color:#111;font-weight:400;-webkit-text-stroke:0.25px #111;transform:scaleX(0.985);transform-origin:right">$14,610.00</div><div class="t" style="left:1089px;top:885.76px;font-size:16px;color:#111;font-weight:400;">$</div><div class="t" style="left:379px;width:800px;text-align:right;top:885.76px;font-size:16px;color:#111;font-weight:400;">-</div><div class="t" style="left:496.5px;width:800px;text-align:right;top:885.76px;font-size:16px;color:#111;font-weight:400;-webkit-text-stroke:0.25px #111;transform:scaleX(0.985);transform-origin:right">$14,610.00</div><div class="t" style="left:609.5px;width:800px;text-align:right;top:885.76px;font-size:16px;color:#111;font-weight:400;-webkit-text-stroke:0.25px #111;transform:scaleX(0.985);transform-origin:right">$9,740.00</div><div class="t" style="left:721.5px;width:800px;text-align:right;top:885.76px;font-size:16px;color:#111;font-weight:400;-webkit-text-stroke:0.25px #111;transform:scaleX(0.985);transform-origin:right">$4,870.00</div><div class="t" style="left:825px;width:800px;text-align:right;top:885.76px;font-size:16px;color:#111;font-weight:400;-webkit-text-stroke:0.25px #111;transform:scaleX(0.985);transform-origin:right">2/1/2024</div><div class="t" style="left:965px;width:800px;text-align:right;top:885.76px;font-size:16px;color:#111;font-weight:400;-webkit-text-stroke:0.25px #111;transform:scaleX(0.985);transform-origin:right">2</div><div class="r" style="left:56px;top:910px;width:1713px;height:35px;background:#d9e1f2"></div><div class="r" style="left:56px;top:944px;width:1713px;height:1px;background:#8fabdc"></div><div class="t" style="left:61.5px;top:920.76px;font-size:16px;color:#111;font-weight:400;-webkit-text-stroke:0.25px #111;transform:scaleX(0.955);transform-origin:left">SMB</div><div class="t" style="left:179.5px;top:920.76px;font-size:16px;color:#111;font-weight:400;-webkit-text-stroke:0.25px #111;transform:scaleX(0.955);transform-origin:left">Canada</div><div class="t" style="left:302.5px;top:920.76px;font-size:16px;color:#111;font-weight:400;-webkit-text-stroke:0.25px #111;transform:scaleX(0.955);transform-origin:left">Premium</div><div class="t" style="left:406px;top:920.76px;font-size:16px;color:#111;font-weight:400;-webkit-text-stroke:0.25px #111;transform:scaleX(0.955);transform-origin:left">None</div><div class="t" style="left:-161px;width:800px;text-align:right;top:920.76px;font-size:16px;color:#111;font-weight:400;-webkit-text-stroke:0.25px #111;transform:scaleX(0.985);transform-origin:right">2518</div><div class="t" style="left:20px;width:800px;text-align:right;top:920.76px;font-size:16px;color:#111;font-weight:400;-webkit-text-stroke:0.25px #111;transform:scaleX(0.985);transform-origin:right">$10.00</div><div class="t" style="left:131.5px;width:800px;text-align:right;top:920.76px;font-size:16px;color:#111;font-weight:400;-webkit-text-stroke:0.25px #111;transform:scaleX(0.985);transform-origin:right">$12.00</div><div class="t" style="left:270.5px;width:800px;text-align:right;top:920.76px;font-size:16px;color:#111;font-weight:400;-webkit-text-stroke:0.25px #111;transform:scaleX(0.985);transform-origin:right">$30,216.00</div><div class="t" style="left:1089px;top:920.76px;font-size:16px;color:#111;font-weight:400;">$</div><div class="t" style="left:379px;width:800px;text-align:right;top:920.76px;font-size:16px;color:#111;font-weight:400;">-</div><div class="t" style="left:496.5px;width:800px;text-align:right;top:920.76px;font-size:16px;color:#111;font-weight:400;-webkit-text-stroke:0.25px #111;transform:scaleX(0.985);transform-origin:right">$30,216.00</div><div class="t" style="left:609.5px;width:800px;text-align:right;top:920.76px;font-size:16px;color:#111;font-weight:400;-webkit-text-stroke:0.25px #111;transform:scaleX(0.985);transform-origin:right">$7,554.00</div><div class="t" style="left:721.5px;width:800px;text-align:right;top:920.76px;font-size:16px;color:#111;font-weight:400;-webkit-text-stroke:0.25px #111;transform:scaleX(0.985);transform-origin:right">$22,662.00</div><div class="t" style="left:825px;width:800px;text-align:right;top:920.76px;font-size:16px;color:#111;font-weight:400;-webkit-text-stroke:0.25px #111;transform:scaleX(0.985);transform-origin:right">6/1/2024</div><div class="t" style="left:965px;width:800px;text-align:right;top:920.76px;font-size:16px;color:#111;font-weight:400;-webkit-text-stroke:0.25px #111;transform:scaleX(0.985);transform-origin:right">6</div><div class="r" style="left:56px;top:945px;width:1713px;height:35px;background:#fff"></div><div class="r" style="left:56px;top:979px;width:1713px;height:1px;background:#8fabdc"></div><div class="t" style="left:61.5px;top:955.76px;font-size:16px;color:#111;font-weight:400;-webkit-text-stroke:0.25px #111;transform:scaleX(0.955);transform-origin:left">Enterprise</div><div class="t" style="left:179.5px;top:955.76px;font-size:16px;color:#111;font-weight:400;-webkit-text-stroke:0.25px #111;transform:scaleX(0.955);transform-origin:left">Germany</div><div class="t" style="left:302.5px;top:955.76px;font-size:16px;color:#111;font-weight:400;-webkit-text-stroke:0.25px #111;transform:scaleX(0.955);transform-origin:left">Premium</div><div class="t" style="left:406px;top:955.76px;font-size:16px;color:#111;font-weight:400;-webkit-text-stroke:0.25px #111;transform:scaleX(0.955);transform-origin:left">None</div><div class="t" style="left:-161px;width:800px;text-align:right;top:955.76px;font-size:16px;color:#111;font-weight:400;-webkit-text-stroke:0.25px #111;transform:scaleX(0.985);transform-origin:right">1006</div><div class="t" style="left:20px;width:800px;text-align:right;top:955.76px;font-size:16px;color:#111;font-weight:400;-webkit-text-stroke:0.25px #111;transform:scaleX(0.985);transform-origin:right">$10.00</div><div class="t" style="left:131.5px;width:800px;text-align:right;top:955.76px;font-size:16px;color:#111;font-weight:400;-webkit-text-stroke:0.25px #111;transform:scaleX(0.985);transform-origin:right">$350.00</div><div class="t" style="left:270.5px;width:800px;text-align:right;top:955.76px;font-size:16px;color:#111;font-weight:400;-webkit-text-stroke:0.25px #111;transform:scaleX(0.985);transform-origin:right">$352,100.00</div><div class="t" style="left:1089px;top:955.76px;font-size:16px;color:#111;font-weight:400;">$</div><div class="t" style="left:379px;width:800px;text-align:right;top:955.76px;font-size:16px;color:#111;font-weight:400;">-</div><div class="t" style="left:496.5px;width:800px;text-align:right;top:955.76px;font-size:16px;color:#111;font-weight:400;-webkit-text-stroke:0.25px #111;transform:scaleX(0.985);transform-origin:right">$352,100.00</div><div class="t" style="left:609.5px;width:800px;text-align:right;top:955.76px;font-size:16px;color:#111;font-weight:400;-webkit-text-stroke:0.25px #111;transform:scaleX(0.985);transform-origin:right">$261,560.00</div><div class="t" style="left:721.5px;width:800px;text-align:right;top:955.76px;font-size:16px;color:#111;font-weight:400;-webkit-text-stroke:0.25px #111;transform:scaleX(0.985);transform-origin:right">$90,540.00</div><div class="t" style="left:825px;width:800px;text-align:right;top:955.76px;font-size:16px;color:#111;font-weight:400;-webkit-text-stroke:0.25px #111;transform:scaleX(0.985);transform-origin:right">6/1/2024</div><div class="t" style="left:965px;width:800px;text-align:right;top:955.76px;font-size:16px;color:#111;font-weight:400;-webkit-text-stroke:0.25px #111;transform:scaleX(0.985);transform-origin:right">6</div><div class="r" style="left:56px;top:980px;width:1713px;height:35px;background:#d9e1f2"></div><div class="r" style="left:56px;top:1014px;width:1713px;height:1px;background:#8fabdc"></div><div class="t" style="left:61.5px;top:990.76px;font-size:16px;color:#111;font-weight:400;-webkit-text-stroke:0.25px #111;transform:scaleX(0.955);transform-origin:left">SMB</div><div class="t" style="left:179.5px;top:990.76px;font-size:16px;color:#111;font-weight:400;-webkit-text-stroke:0.25px #111;transform:scaleX(0.955);transform-origin:left">Germany</div><div class="t" style="left:302.5px;top:990.76px;font-size:16px;color:#111;font-weight:400;-webkit-text-stroke:0.25px #111;transform:scaleX(0.955);transform-origin:left">Premium</div><div class="t" style="left:406px;top:990.76px;font-size:16px;color:#111;font-weight:400;-webkit-text-stroke:0.25px #111;transform:scaleX(0.955);transform-origin:left">None</div><div class="t" style="left:-161px;width:800px;text-align:right;top:990.76px;font-size:16px;color:#111;font-weight:400;-webkit-text-stroke:0.25px #111;transform:scaleX(0.985);transform-origin:right">367</div><div class="t" style="left:20px;width:800px;text-align:right;top:990.76px;font-size:16px;color:#111;font-weight:400;-webkit-text-stroke:0.25px #111;transform:scaleX(0.985);transform-origin:right">$10.00</div><div class="t" style="left:131.5px;width:800px;text-align:right;top:990.76px;font-size:16px;color:#111;font-weight:400;-webkit-text-stroke:0.25px #111;transform:scaleX(0.985);transform-origin:right">$12.00</div><div class="t" style="left:270.5px;width:800px;text-align:right;top:990.76px;font-size:16px;color:#111;font-weight:400;-webkit-text-stroke:0.25px #111;transform:scaleX(0.985);transform-origin:right">$4,404.00</div><div class="t" style="left:1089px;top:990.76px;font-size:16px;color:#111;font-weight:400;">$</div><div class="t" style="left:379px;width:800px;text-align:right;top:990.76px;font-size:16px;color:#111;font-weight:400;">-</div><div class="t" style="left:496.5px;width:800px;text-align:right;top:990.76px;font-size:16px;color:#111;font-weight:400;-webkit-text-stroke:0.25px #111;transform:scaleX(0.985);transform-origin:right">$4,404.00</div><div class="t" style="left:609.5px;width:800px;text-align:right;top:990.76px;font-size:16px;color:#111;font-weight:400;-webkit-text-stroke:0.25px #111;transform:scaleX(0.985);transform-origin:right">$1,101.00</div><div class="t" style="left:721.5px;width:800px;text-align:right;top:990.76px;font-size:16px;color:#111;font-weight:400;-webkit-text-stroke:0.25px #111;transform:scaleX(0.985);transform-origin:right">$3,303.00</div><div class="t" style="left:825px;width:800px;text-align:right;top:990.76px;font-size:16px;color:#111;font-weight:400;-webkit-text-stroke:0.25px #111;transform:scaleX(0.985);transform-origin:right">7/1/2024</div><div class="t" style="left:965px;width:800px;text-align:right;top:990.76px;font-size:16px;color:#111;font-weight:400;-webkit-text-stroke:0.25px #111;transform:scaleX(0.985);transform-origin:right">7</div><div class="r" style="left:56px;top:1015px;width:1713px;height:35px;background:#fff"></div><div class="r" style="left:56px;top:1049px;width:1713px;height:1px;background:#8fabdc"></div><div class="t" style="left:61.5px;top:1025.76px;font-size:16px;color:#111;font-weight:400;-webkit-text-stroke:0.25px #111;transform:scaleX(0.955);transform-origin:left">Enterprise</div><div class="t" style="left:179.5px;top:1025.76px;font-size:16px;color:#111;font-weight:400;-webkit-text-stroke:0.25px #111;transform:scaleX(0.955);transform-origin:left">Mexico</div><div class="t" style="left:302.5px;top:1025.76px;font-size:16px;color:#111;font-weight:400;-webkit-text-stroke:0.25px #111;transform:scaleX(0.955);transform-origin:left">Premium</div><div class="t" style="left:406px;top:1025.76px;font-size:16px;color:#111;font-weight:400;-webkit-text-stroke:0.25px #111;transform:scaleX(0.955);transform-origin:left">None</div><div class="t" style="left:-161px;width:800px;text-align:right;top:1025.76px;font-size:16px;color:#111;font-weight:400;-webkit-text-stroke:0.25px #111;transform:scaleX(0.985);transform-origin:right">883</div><div class="t" style="left:20px;width:800px;text-align:right;top:1025.76px;font-size:16px;color:#111;font-weight:400;-webkit-text-stroke:0.25px #111;transform:scaleX(0.985);transform-origin:right">$10.00</div><div class="t" style="left:131.5px;width:800px;text-align:right;top:1025.76px;font-size:16px;color:#111;font-weight:400;-webkit-text-stroke:0.25px #111;transform:scaleX(0.985);transform-origin:right">$7.00</div><div class="t" style="left:270.5px;width:800px;text-align:right;top:1025.76px;font-size:16px;color:#111;font-weight:400;-webkit-text-stroke:0.25px #111;transform:scaleX(0.985);transform-origin:right">$6,181.00</div><div class="t" style="left:1089px;top:1025.76px;font-size:16px;color:#111;font-weight:400;">$</div><div class="t" style="left:379px;width:800px;text-align:right;top:1025.76px;font-size:16px;color:#111;font-weight:400;">-</div><div class="t" style="left:496.5px;width:800px;text-align:right;top:1025.76px;font-size:16px;color:#111;font-weight:400;-webkit-text-stroke:0.25px #111;transform:scaleX(0.985);transform-origin:right">$6,181.00</div><div class="t" style="left:609.5px;width:800px;text-align:right;top:1025.76px;font-size:16px;color:#111;font-weight:400;-webkit-text-stroke:0.25px #111;transform:scaleX(0.985);transform-origin:right">$4,415.00</div><div class="t" style="left:721.5px;width:800px;text-align:right;top:1025.76px;font-size:16px;color:#111;font-weight:400;-webkit-text-stroke:0.25px #111;transform:scaleX(0.985);transform-origin:right">$1,766.00</div><div class="t" style="left:825px;width:800px;text-align:right;top:1025.76px;font-size:16px;color:#111;font-weight:400;-webkit-text-stroke:0.25px #111;transform:scaleX(0.985);transform-origin:right">8/1/2024</div><div class="t" style="left:965px;width:800px;text-align:right;top:1025.76px;font-size:16px;color:#111;font-weight:400;-webkit-text-stroke:0.25px #111;transform:scaleX(0.985);transform-origin:right">8</div><div class="r" style="left:56px;top:1050px;width:1713px;height:35px;background:#d9e1f2"></div><div class="r" style="left:56px;top:1084px;width:1713px;height:1px;background:#8fabdc"></div><div class="t" style="left:61.5px;top:1060.76px;font-size:16px;color:#111;font-weight:400;-webkit-text-stroke:0.25px #111;transform:scaleX(0.955);transform-origin:left">Government</div><div class="t" style="left:179.5px;top:1060.76px;font-size:16px;color:#111;font-weight:400;-webkit-text-stroke:0.25px #111;transform:scaleX(0.955);transform-origin:left">France</div><div class="t" style="left:302.5px;top:1060.76px;font-size:16px;color:#111;font-weight:400;-webkit-text-stroke:0.25px #111;transform:scaleX(0.955);transform-origin:left">Premium</div><div class="t" style="left:406px;top:1060.76px;font-size:16px;color:#111;font-weight:400;-webkit-text-stroke:0.25px #111;transform:scaleX(0.955);transform-origin:left">None</div><div class="t" style="left:-161px;width:800px;text-align:right;top:1060.76px;font-size:16px;color:#111;font-weight:400;-webkit-text-stroke:0.25px #111;transform:scaleX(0.985);transform-origin:right">549</div><div class="t" style="left:20px;width:800px;text-align:right;top:1060.76px;font-size:16px;color:#111;font-weight:400;-webkit-text-stroke:0.25px #111;transform:scaleX(0.985);transform-origin:right">$10.00</div><div class="t" style="left:131.5px;width:800px;text-align:right;top:1060.76px;font-size:16px;color:#111;font-weight:400;-webkit-text-stroke:0.25px #111;transform:scaleX(0.985);transform-origin:right">$15.00</div><div class="t" style="left:270.5px;width:800px;text-align:right;top:1060.76px;font-size:16px;color:#111;font-weight:400;-webkit-text-stroke:0.25px #111;transform:scaleX(0.985);transform-origin:right">$8,235.00</div><div class="t" style="left:1089px;top:1060.76px;font-size:16px;color:#111;font-weight:400;">$</div><div class="t" style="left:379px;width:800px;text-align:right;top:1060.76px;font-size:16px;color:#111;font-weight:400;">-</div><div class="t" style="left:496.5px;width:800px;text-align:right;top:1060.76px;font-size:16px;color:#111;font-weight:400;-webkit-text-stroke:0.25px #111;transform:scaleX(0.985);transform-origin:right">$8,235.00</div><div class="t" style="left:609.5px;width:800px;text-align:right;top:1060.76px;font-size:16px;color:#111;font-weight:400;-webkit-text-stroke:0.25px #111;transform:scaleX(0.985);transform-origin:right">$5,490.00</div><div class="t" style="left:721.5px;width:800px;text-align:right;top:1060.76px;font-size:16px;color:#111;font-weight:400;-webkit-text-stroke:0.25px #111;transform:scaleX(0.985);transform-origin:right">$2,745.00</div><div class="t" style="left:825px;width:800px;text-align:right;top:1060.76px;font-size:16px;color:#111;font-weight:400;-webkit-text-stroke:0.25px #111;transform:scaleX(0.985);transform-origin:right">9/1/2023</div><div class="t" style="left:965px;width:800px;text-align:right;top:1060.76px;font-size:16px;color:#111;font-weight:400;-webkit-text-stroke:0.25px #111;transform:scaleX(0.985);transform-origin:right">9</div><div class="r" style="left:56px;top:1085px;width:1713px;height:35px;background:#fff"></div><div class="r" style="left:56px;top:1119px;width:1713px;height:1px;background:#8fabdc"></div><div class="t" style="left:61.5px;top:1095.76px;font-size:16px;color:#111;font-weight:400;-webkit-text-stroke:0.25px #111;transform:scaleX(0.955);transform-origin:left">Consumer</div><div class="t" style="left:179.5px;top:1095.76px;font-size:16px;color:#111;font-weight:400;-webkit-text-stroke:0.25px #111;transform:scaleX(0.955);transform-origin:left">Mexico</div><div class="t" style="left:302.5px;top:1095.76px;font-size:16px;color:#111;font-weight:400;-webkit-text-stroke:0.25px #111;transform:scaleX(0.955);transform-origin:left">Premium</div><div class="t" style="left:406px;top:1095.76px;font-size:16px;color:#111;font-weight:400;-webkit-text-stroke:0.25px #111;transform:scaleX(0.955);transform-origin:left">None</div><div class="t" style="left:-161px;width:800px;text-align:right;top:1095.76px;font-size:16px;color:#111;font-weight:400;-webkit-text-stroke:0.25px #111;transform:scaleX(0.985);transform-origin:right">788</div><div class="t" style="left:20px;width:800px;text-align:right;top:1095.76px;font-size:16px;color:#111;font-weight:400;-webkit-text-stroke:0.25px #111;transform:scaleX(0.985);transform-origin:right">$10.00</div><div class="t" style="left:131.5px;width:800px;text-align:right;top:1095.76px;font-size:16px;color:#111;font-weight:400;-webkit-text-stroke:0.25px #111;transform:scaleX(0.985);transform-origin:right">$300.00</div><div class="t" style="left:270.5px;width:800px;text-align:right;top:1095.76px;font-size:16px;color:#111;font-weight:400;-webkit-text-stroke:0.25px #111;transform:scaleX(0.985);transform-origin:right">$236,400.00</div><div class="t" style="left:1089px;top:1095.76px;font-size:16px;color:#111;font-weight:400;">$</div><div class="t" style="left:379px;width:800px;text-align:right;top:1095.76px;font-size:16px;color:#111;font-weight:400;">-</div><div class="t" style="left:496.5px;width:800px;text-align:right;top:1095.76px;font-size:16px;color:#111;font-weight:400;-webkit-text-stroke:0.25px #111;transform:scaleX(0.985);transform-origin:right">$236,400.00</div><div class="t" style="left:609.5px;width:800px;text-align:right;top:1095.76px;font-size:16px;color:#111;font-weight:400;-webkit-text-stroke:0.25px #111;transform:scaleX(0.985);transform-origin:right">$197,000.00</div><div class="t" style="left:721.5px;width:800px;text-align:right;top:1095.76px;font-size:16px;color:#111;font-weight:400;-webkit-text-stroke:0.25px #111;transform:scaleX(0.985);transform-origin:right">$39,400.00</div><div class="t" style="left:825px;width:800px;text-align:right;top:1095.76px;font-size:16px;color:#111;font-weight:400;-webkit-text-stroke:0.25px #111;transform:scaleX(0.985);transform-origin:right">9/1/2023</div><div class="t" style="left:965px;width:800px;text-align:right;top:1095.76px;font-size:16px;color:#111;font-weight:400;-webkit-text-stroke:0.25px #111;transform:scaleX(0.985);transform-origin:right">9</div><div class="r" style="left:56px;top:1120px;width:1713px;height:35px;background:#d9e1f2"></div><div class="r" style="left:56px;top:1154px;width:1713px;height:1px;background:#8fabdc"></div><div class="t" style="left:61.5px;top:1130.76px;font-size:16px;color:#111;font-weight:400;-webkit-text-stroke:0.25px #111;transform:scaleX(0.955);transform-origin:left">Government</div><div class="t" style="left:179.5px;top:1130.76px;font-size:16px;color:#111;font-weight:400;-webkit-text-stroke:0.25px #111;transform:scaleX(0.955);transform-origin:left">Mexico</div><div class="t" style="left:302.5px;top:1130.76px;font-size:16px;color:#111;font-weight:400;-webkit-text-stroke:0.25px #111;transform:scaleX(0.955);transform-origin:left">Premium</div><div class="t" style="left:406px;top:1130.76px;font-size:16px;color:#111;font-weight:400;-webkit-text-stroke:0.25px #111;transform:scaleX(0.955);transform-origin:left">None</div><div class="t" style="left:-161px;width:800px;text-align:right;top:1130.76px;font-size:16px;color:#111;font-weight:400;-webkit-text-stroke:0.25px #111;transform:scaleX(0.985);transform-origin:right">2472</div><div class="t" style="left:20px;width:800px;text-align:right;top:1130.76px;font-size:16px;color:#111;font-weight:400;-webkit-text-stroke:0.25px #111;transform:scaleX(0.985);transform-origin:right">$10.00</div><div class="t" style="left:131.5px;width:800px;text-align:right;top:1130.76px;font-size:16px;color:#111;font-weight:400;-webkit-text-stroke:0.25px #111;transform:scaleX(0.985);transform-origin:right">$15.00</div><div class="t" style="left:270.5px;width:800px;text-align:right;top:1130.76px;font-size:16px;color:#111;font-weight:400;-webkit-text-stroke:0.25px #111;transform:scaleX(0.985);transform-origin:right">$37,080.00</div><div class="t" style="left:1089px;top:1130.76px;font-size:16px;color:#111;font-weight:400;">$</div><div class="t" style="left:379px;width:800px;text-align:right;top:1130.76px;font-size:16px;color:#111;font-weight:400;">-</div><div class="t" style="left:496.5px;width:800px;text-align:right;top:1130.76px;font-size:16px;color:#111;font-weight:400;-webkit-text-stroke:0.25px #111;transform:scaleX(0.985);transform-origin:right">$37,080.00</div><div class="t" style="left:609.5px;width:800px;text-align:right;top:1130.76px;font-size:16px;color:#111;font-weight:400;-webkit-text-stroke:0.25px #111;transform:scaleX(0.985);transform-origin:right">$24,720.00</div><div class="t" style="left:721.5px;width:800px;text-align:right;top:1130.76px;font-size:16px;color:#111;font-weight:400;-webkit-text-stroke:0.25px #111;transform:scaleX(0.985);transform-origin:right">$12,360.00</div><div class="t" style="left:825px;width:800px;text-align:right;top:1130.76px;font-size:16px;color:#111;font-weight:400;-webkit-text-stroke:0.25px #111;transform:scaleX(0.985);transform-origin:right">9/1/2024</div><div class="t" style="left:965px;width:800px;text-align:right;top:1130.76px;font-size:16px;color:#111;font-weight:400;-webkit-text-stroke:0.25px #111;transform:scaleX(0.985);transform-origin:right">9</div><div class="r" style="left:56px;top:1155px;width:1713px;height:35px;background:#fff"></div><div class="r" style="left:56px;top:1189px;width:1713px;height:1px;background:#8fabdc"></div><div class="t" style="left:61.5px;top:1165.76px;font-size:16px;color:#111;font-weight:400;-webkit-text-stroke:0.25px #111;transform:scaleX(0.955);transform-origin:left">Enterprise</div><div class="t" style="left:179.5px;top:1165.76px;font-size:16px;color:#111;font-weight:400;-webkit-text-stroke:0.25px #111;transform:scaleX(0.955);transform-origin:left">United States</div><div class="t" style="left:302.5px;top:1165.76px;font-size:16px;color:#111;font-weight:400;-webkit-text-stroke:0.25px #111;transform:scaleX(0.955);transform-origin:left">Premium</div><div class="t" style="left:406px;top:1165.76px;font-size:16px;color:#111;font-weight:400;-webkit-text-stroke:0.25px #111;transform:scaleX(0.955);transform-origin:left">None</div><div class="t" style="left:-161px;width:800px;text-align:right;top:1165.76px;font-size:16px;color:#111;font-weight:400;-webkit-text-stroke:0.25px #111;transform:scaleX(0.985);transform-origin:right">1143</div><div class="t" style="left:20px;width:800px;text-align:right;top:1165.76px;font-size:16px;color:#111;font-weight:400;-webkit-text-stroke:0.25px #111;transform:scaleX(0.985);transform-origin:right">$10.00</div><div class="t" style="left:131.5px;width:800px;text-align:right;top:1165.76px;font-size:16px;color:#111;font-weight:400;-webkit-text-stroke:0.25px #111;transform:scaleX(0.985);transform-origin:right">$7.00</div><div class="t" style="left:270.5px;width:800px;text-align:right;top:1165.76px;font-size:16px;color:#111;font-weight:400;-webkit-text-stroke:0.25px #111;transform:scaleX(0.985);transform-origin:right">$8,001.00</div><div class="t" style="left:1089px;top:1165.76px;font-size:16px;color:#111;font-weight:400;">$</div><div class="t" style="left:379px;width:800px;text-align:right;top:1165.76px;font-size:16px;color:#111;font-weight:400;">-</div><div class="t" style="left:496.5px;width:800px;text-align:right;top:1165.76px;font-size:16px;color:#111;font-weight:400;-webkit-text-stroke:0.25px #111;transform:scaleX(0.985);transform-origin:right">$8,001.00</div><div class="t" style="left:609.5px;width:800px;text-align:right;top:1165.76px;font-size:16px;color:#111;font-weight:400;-webkit-text-stroke:0.25px #111;transform:scaleX(0.985);transform-origin:right">$5,715.00</div><div class="t" style="left:721.5px;width:800px;text-align:right;top:1165.76px;font-size:16px;color:#111;font-weight:400;-webkit-text-stroke:0.25px #111;transform:scaleX(0.985);transform-origin:right">$2,286.00</div><div class="t" style="left:825px;width:800px;text-align:right;top:1165.76px;font-size:16px;color:#111;font-weight:400;-webkit-text-stroke:0.25px #111;transform:scaleX(0.985);transform-origin:right">10/1/2024</div><div class="t" style="left:965px;width:800px;text-align:right;top:1165.76px;font-size:16px;color:#111;font-weight:400;-webkit-text-stroke:0.25px #111;transform:scaleX(0.985);transform-origin:right">10</div><div class="r" style="left:56px;top:1190px;width:1713px;height:35px;background:#d9e1f2"></div><div class="r" style="left:56px;top:1224px;width:1713px;height:1px;background:#8fabdc"></div><div class="t" style="left:61.5px;top:1200.76px;font-size:16px;color:#111;font-weight:400;-webkit-text-stroke:0.25px #111;transform:scaleX(0.955);transform-origin:left">Enterprise</div><div class="t" style="left:179.5px;top:1200.76px;font-size:16px;color:#111;font-weight:400;-webkit-text-stroke:0.25px #111;transform:scaleX(0.955);transform-origin:left">Canada</div><div class="t" style="left:302.5px;top:1200.76px;font-size:16px;color:#111;font-weight:400;-webkit-text-stroke:0.25px #111;transform:scaleX(0.955);transform-origin:left">Premium</div><div class="t" style="left:406px;top:1200.76px;font-size:16px;color:#111;font-weight:400;-webkit-text-stroke:0.25px #111;transform:scaleX(0.955);transform-origin:left">None</div><div class="t" style="left:-161px;width:800px;text-align:right;top:1200.76px;font-size:16px;color:#111;font-weight:400;-webkit-text-stroke:0.25px #111;transform:scaleX(0.985);transform-origin:right">1725</div><div class="t" style="left:20px;width:800px;text-align:right;top:1200.76px;font-size:16px;color:#111;font-weight:400;-webkit-text-stroke:0.25px #111;transform:scaleX(0.985);transform-origin:right">$10.00</div><div class="t" style="left:131.5px;width:800px;text-align:right;top:1200.76px;font-size:16px;color:#111;font-weight:400;-webkit-text-stroke:0.25px #111;transform:scaleX(0.985);transform-origin:right">$350.00</div><div class="t" style="left:270.5px;width:800px;text-align:right;top:1200.76px;font-size:16px;color:#111;font-weight:400;-webkit-text-stroke:0.25px #111;transform:scaleX(0.985);transform-origin:right">$603,750.00</div><div class="t" style="left:1089px;top:1200.76px;font-size:16px;color:#111;font-weight:400;">$</div><div class="t" style="left:379px;width:800px;text-align:right;top:1200.76px;font-size:16px;color:#111;font-weight:400;">-</div><div class="t" style="left:496.5px;width:800px;text-align:right;top:1200.76px;font-size:16px;color:#111;font-weight:400;-webkit-text-stroke:0.25px #111;transform:scaleX(0.985);transform-origin:right">$603,750.00</div><div class="t" style="left:609.5px;width:800px;text-align:right;top:1200.76px;font-size:16px;color:#111;font-weight:400;-webkit-text-stroke:0.25px #111;transform:scaleX(0.985);transform-origin:right">$448,500.00</div><div class="t" style="left:725px;width:800px;text-align:right;top:1200.76px;font-size:16px;color:#111;font-weight:400;-webkit-text-stroke:0.25px #111;transform:scaleX(0.985);transform-origin:right">$155,250.00</div><div class="t" style="left:825px;width:800px;text-align:right;top:1200.76px;font-size:16px;color:#111;font-weight:400;-webkit-text-stroke:0.25px #111;transform:scaleX(0.985);transform-origin:right">11/1/2023</div><div class="t" style="left:965px;width:800px;text-align:right;top:1200.76px;font-size:16px;color:#111;font-weight:400;-webkit-text-stroke:0.25px #111;transform:scaleX(0.985);transform-origin:right">11</div><div class="r" style="left:56px;top:1225px;width:1713px;height:35px;background:#fff"></div><div class="r" style="left:56px;top:1259px;width:1713px;height:1px;background:#8fabdc"></div><div class="t" style="left:61.5px;top:1235.76px;font-size:16px;color:#111;font-weight:400;-webkit-text-stroke:0.25px #111;transform:scaleX(0.955);transform-origin:left">SMB</div><div class="t" style="left:179.5px;top:1235.76px;font-size:16px;color:#111;font-weight:400;-webkit-text-stroke:0.25px #111;transform:scaleX(0.955);transform-origin:left">United States</div><div class="t" style="left:302.5px;top:1235.76px;font-size:16px;color:#111;font-weight:400;-webkit-text-stroke:0.25px #111;transform:scaleX(0.955);transform-origin:left">Premium</div><div class="t" style="left:406px;top:1235.76px;font-size:16px;color:#111;font-weight:400;-webkit-text-stroke:0.25px #111;transform:scaleX(0.955);transform-origin:left">None</div><div class="t" style="left:-161px;width:800px;text-align:right;top:1235.76px;font-size:16px;color:#111;font-weight:400;-webkit-text-stroke:0.25px #111;transform:scaleX(0.985);transform-origin:right">912</div><div class="t" style="left:20px;width:800px;text-align:right;top:1235.76px;font-size:16px;color:#111;font-weight:400;-webkit-text-stroke:0.25px #111;transform:scaleX(0.985);transform-origin:right">$10.00</div><div class="t" style="left:135px;width:800px;text-align:right;top:1235.76px;font-size:16px;color:#111;font-weight:400;-webkit-text-stroke:0.25px #111;transform:scaleX(0.985);transform-origin:right">$12.00</div><div class="t" style="left:274px;width:800px;text-align:right;top:1235.76px;font-size:16px;color:#111;font-weight:400;-webkit-text-stroke:0.25px #111;transform:scaleX(0.985);transform-origin:right">$10,944.00</div><div class="t" style="left:1089px;top:1235.76px;font-size:16px;color:#111;font-weight:400;">$</div><div class="t" style="left:379px;width:800px;text-align:right;top:1235.76px;font-size:16px;color:#111;font-weight:400;">-</div><div class="t" style="left:500px;width:800px;text-align:right;top:1235.76px;font-size:16px;color:#111;font-weight:400;-webkit-text-stroke:0.25px #111;transform:scaleX(0.985);transform-origin:right">$10,944.00</div><div class="t" style="left:613px;width:800px;text-align:right;top:1235.76px;font-size:16px;color:#111;font-weight:400;-webkit-text-stroke:0.25px #111;transform:scaleX(0.985);transform-origin:right">$2,736.00</div><div class="t" style="left:725px;width:800px;text-align:right;top:1235.76px;font-size:16px;color:#111;font-weight:400;-webkit-text-stroke:0.25px #111;transform:scaleX(0.985);transform-origin:right">$8,208.00</div><div class="t" style="left:825px;width:800px;text-align:right;top:1235.76px;font-size:16px;color:#111;font-weight:400;-webkit-text-stroke:0.25px #111;transform:scaleX(0.985);transform-origin:right">11/1/2023</div><div class="t" style="left:965px;width:800px;text-align:right;top:1235.76px;font-size:16px;color:#111;font-weight:400;-webkit-text-stroke:0.25px #111;transform:scaleX(0.985);transform-origin:right">11</div><div class="r" style="left:56px;top:1260px;width:1713px;height:10px;background:#d9e1f2"></div><div class="r" style="left:172px;top:280px;width:2px;height:990px;background:#a9bce4"></div><div class="r" style="left:295px;top:280px;width:2px;height:990px;background:#a9bce4"></div><div class="r" style="left:395px;top:280px;width:2px;height:990px;background:#a9bce4"></div><div class="r" style="left:530px;top:280px;width:2px;height:990px;background:#a9bce4"></div><div class="r" style="left:642px;top:280px;width:2px;height:990px;background:#a9bce4"></div><div class="r" style="left:823px;top:280px;width:2px;height:990px;background:#a9bce4"></div><div class="r" style="left:938px;top:280px;width:2px;height:990px;background:#a9bce4"></div><div class="r" style="left:1077px;top:280px;width:2px;height:990px;background:#a9bce4"></div><div class="r" style="left:1183px;top:280px;width:2px;height:990px;background:#a9bce4"></div><div class="r" style="left:1303px;top:280px;width:2px;height:990px;background:#a9bce4"></div><div class="r" style="left:1416px;top:280px;width:2px;height:990px;background:#a9bce4"></div><div class="r" style="left:1528px;top:280px;width:2px;height:990px;background:#a9bce4"></div><div class="r" style="left:1628px;top:280px;width:2px;height:990px;background:#a9bce4"></div></div><div class="r" style="left:10px;top:1270px;width:1753px;height:40px;background:#f5f5f5"></div><div class="r" style="left:10px;top:1270px;width:1753px;height:1px;background:#e0e0e0"></div><svg class="r" style="left:24px;top:1282px;" width="12" height="16" viewBox="0 0 12 16"><path d="M9 2 L3 8 L9 14" fill="none" stroke="#424242" stroke-width="1.3" stroke-linecap="round" stroke-linejoin="round"/></svg><svg class="r" style="left:59px;top:1282px;" width="12" height="16" viewBox="0 0 12 16"><path d="M3 2 L9 8 L3 14" fill="none" stroke="#424242" stroke-width="1.3" stroke-linecap="round" stroke-linejoin="round"/></svg><svg class="r" style="left:91px;top:1282px;" width="18" height="14" viewBox="0 0 18 14"><path d="M1.5 2.5 H16.5 M1.5 7.5 H16.5 M1.5 12.5 H16.5" stroke="#424242" stroke-width="1.3" stroke-linecap="round"/></svg><div class="r" style="left:130px;top:1270px;width:101px;height:35px;background:#fff;border-radius:0 0 6px 6px;box-shadow:0 1px 2px rgba(0,0,0,.14)"></div><div class="t" style="left:140px;top:1278.79px;font-size:16.2px;color:#242424;font-weight:700;letter-spacing:-0.2px">Sales data</div><div class="r" style="left:140px;top:1302px;width:81px;height:3px;background:#107c41;border-radius:2px"></div><div class="t" style="left:242px;top:1278.11px;font-size:17px;color:#424242;font-weight:400;">Dashboard</div><svg class="r" style="left:343px;top:1280px;" width="15" height="15" viewBox="0 0 15 15"><path d="M7.5 1.5 V13.5 M1.5 7.5 H13.5" stroke="#424242" stroke-width="1.3" stroke-linecap="round"/></svg><div class="r" style="left:10px;top:1310px;width:2380px;height:1px;background:#e0e0e0"></div><div class="t" style="left:20px;top:1316.80px;font-size:15px;color:#616161;font-weight:400;">Calculation Mode: Automatic</div><div class="t" style="left:232px;top:1316.80px;font-size:15px;color:#616161;font-weight:400;">Workbook Statistics</div><svg class="r" style="left:2037.0px;top:1320.75px;" width="14" height="8.5" viewBox="0 0 14 8.5"><path d="M1 1 L7.0 7.5 L13 1" fill="none" stroke="#424242" stroke-width="1.3" stroke-linecap="round" stroke-linejoin="round"/></svg><div class="t" style="left:2071.5px;top:1316.97px;font-size:14.8px;color:#616161;font-weight:400;">Give Feedback to Microsoft</div><svg class="r" style="left:2271px;top:1318px;" width="18" height="14" viewBox="0 0 18 14"><path d="M1.5 7 H15.5" stroke="#424242" stroke-width="1.3" stroke-linecap="round"/></svg><div class="t" style="left:2308px;top:1316.97px;font-size:14.8px;color:#616161;font-weight:400;">100%</div><svg class="r" style="left:2363px;top:1316px;" width="18" height="18" viewBox="0 0 18 18"><path d="M9 1.5 V16.5 M1.5 9 H16.5" stroke="#424242" stroke-width="1.3" stroke-linecap="round"/></svg><div class="r" style="left:1763px;top:220px;width:627px;height:1090px;background:#fafafa"></div><div class="r" style="left:1762px;top:220px;width:1px;height:1090px;background:#c8c8c8"></div><div class="t" style="left:1783px;top:251.42px;font-size:19px;color:#242424;font-weight:400;-webkit-text-stroke:0.5px #242424">Excel Labs</div><svg class="r" style="left:2299px;top:255px;" width="24" height="10" viewBox="0 0 24 10"><circle cx="3.3" cy="5" r="1.75" fill="#424242"/><circle cx="10.2" cy="5" r="1.75" fill="#424242"/><circle cx="17.1" cy="5" r="1.75" fill="#424242"/></svg><svg class="r" style="left:2341px;top:251px;" width="18" height="18" viewBox="0 0 18 18"><path d="M1.5 1.5 L16.5 16.5 M16.5 1.5 L1.5 16.5" stroke="#424242" stroke-width="1.4" stroke-linecap="round"/></svg><svg class="r" style="left:1799px;top:330px;" width="17" height="14" viewBox="0 0 17 14"><path d="M1 1.5 H16 M1 7 H16 M1 12.5 H16" stroke="#424242" stroke-width="1.3"/></svg><div class="r" style="left:2325px;top:318px;width:40px;height:40px;background:#107c41;border-radius:7px"></div><svg class="r" style="left:2334px;top:327px;" width="22" height="22" viewBox="0 0 22 22"><path d="M10 3.5 H5.5 A2.5 2.5 0 0 0 3 6 V16 A2.5 2.5 0 0 0 5.5 18.5 H15.5 A2.5 2.5 0 0 0 18 16 V11.5" fill="none" stroke="#fff" stroke-width="1.4"/><path d="M9 13 L18.5 3.5" stroke="#fff" stroke-width="1.4" stroke-linecap="round"/></svg><div class="t" style="left:1575.5px;width:1000px;text-align:center;top:383.73px;font-size:14.5px;color:#707070;font-weight:400;">Today</div><div class="r" style="left:1843px;top:435px;width:507px;height:95px;background:#f5f5f5;border-radius:10px"></div><div class="t" style="left:1863px;top:450.86px;font-size:17.3px;color:#424242;font-weight:400;">Run a full analysis on this dataset. I want to understand</div><div class="t" style="left:1863px;top:475.86px;font-size:17.3px;color:#424242;font-weight:400;">some important insights to help me make decisions about</div><div class="t" style="left:1863px;top:500.86px;font-size:17.3px;color:#424242;font-weight:400;">my business. Make it visual!</div><svg class="r" style="left:1807px;top:554px;" width="21" height="22" viewBox="0 0 21 22"><defs><linearGradient id="agm" x1="0" y1="0" x2="1" y2="1"><stop offset="0" stop-color="#3db56b"/><stop offset="1" stop-color="#178074"/></linearGradient></defs>
<rect x="0" y="0" width="21" height="22" rx="4.5" fill="url(#agm)"/>
<path d="M6.8 0 V22 M14.1 0 V22 M0 7.3 H21 M0 14.8 H21" stroke="#9de99d" stroke-width="1.4"/></svg><div class="t" style="left:1843px;top:557.26px;font-size:18px;color:#242424;font-weight:400;-webkit-text-stroke:0.45px #242424">Agent mode</div><div class="t" style="left:1803px;top:599.27px;font-size:17.4px;color:#363636;font-weight:400;">OK, I’ll start working on your request.</div><div class="t" style="left:1803px;top:634.19px;font-size:17.5px;color:#707070;font-weight:400;">Editing file</div><svg class="r" style="left:1892px;top:636px;" width="16" height="10" viewBox="0 0 16 10"><path d="M1.5 8 L7.5 2 L13.5 8" fill="none" stroke="#616161" stroke-width="1.3" stroke-linecap="round" stroke-linejoin="round"/></svg><div class="r" style="left:1803px;top:673px;width:547px;height:289px;box-sizing:border-box;border:1px solid #e3e3e3;border-radius:13px;background:#fafafa"></div><svg class="r" style="left:1826px;top:699px;" width="22" height="18" viewBox="0 0 22 18"><path d="M1.5 9.5 L7.5 15.5 L20.5 2.5" fill="none" stroke="#616161" stroke-width="1.2" stroke-linecap="round" stroke-linejoin="round"/></svg><div class="t" style="left:1863px;top:700.61px;font-size:17px;color:#424242;font-weight:400;">Planning analysis and visuals</div><svg class="r" style="left:2306px;top:701px;" width="12" height="16" viewBox="0 0 12 16"><path d="M3 2 L9 8 L3 14" fill="none" stroke="#616161" stroke-width="1.3" stroke-linecap="round" stroke-linejoin="round"/></svg><svg class="r" style="left:1826px;top:744px;" width="22" height="18" viewBox="0 0 22 18"><path d="M1.5 9.5 L7.5 15.5 L20.5 2.5" fill="none" stroke="#616161" stroke-width="1.2" stroke-linecap="round" stroke-linejoin="round"/></svg><div class="t" style="left:1863px;top:745.61px;font-size:17px;color:#424242;font-weight:400;">Designing step-by-step analysis</div><svg class="r" style="left:2306px;top:746px;" width="12" height="16" viewBox="0 0 12 16"><path d="M3 2 L9 8 L3 14" fill="none" stroke="#616161" stroke-width="1.3" stroke-linecap="round" stroke-linejoin="round"/></svg><svg class="r" style="left:1818px;top:793px;" width="36" height="12" viewBox="0 0 36 12"><circle cx="5" cy="6" r="3" fill="#3a8ac4"/><circle cx="16" cy="6" r="3" fill="#4a9f8c"/><rect x="23" y="3" width="11" height="6" rx="3" fill="#9cbe48"/></svg><div class="t" style="left:1863px;top:790.36px;font-size:17.3px;color:#424242;font-weight:400;">Building pivots and charts</div><svg class="r" style="left:2304px;top:794px;" width="16" height="12" viewBox="0 0 16 12"><path d="M2 3 L8 9 L14 3" fill="none" stroke="#616161" stroke-width="1.3" stroke-linecap="round" stroke-linejoin="round"/></svg><div class="t" style="left:1863px;top:821.94px;font-size:17.2px;color:#616161;font-weight:400;">I'm outlining steps for pivot tables in the</div><div class="t" style="left:1863px;top:846.94px;font-size:17.2px;color:#616161;font-weight:400;">'Dashboard': monthly trends, product sales, segment</div><div class="t" style="left:1863px;top:871.94px;font-size:17.2px;color:#616161;font-weight:400;">sales, country rankings, discount bands. I'm also planning</div><div class="t" style="left:1863px;top:896.94px;font-size:17.2px;color:#616161;font-weight:400;">charts and applying conditional formatting. Verification</div><div class="t" style="left:1863px;top:921.94px;font-size:17.2px;color:#616161;font-weight:400;">follows each step.</div><div class="r" style="left:1783px;top:1128px;width:587px;height:97px;box-sizing:border-box;border:1px solid #e3e3e3;border-bottom-color:#b8b8b8;border-radius:18px;background:#fff;box-shadow:0 1px 1px rgba(0,0,0,.22),0 3px 7px rgba(0,0,0,.08)"></div><div class="r" style="left:1802.5px;top:1137.5px;width:2.0px;height:26.5px;background:#555"></div><div class="t" style="left:1804px;top:1142.69px;font-size:17.5px;color:#707070;font-weight:400;">Describe what you’d like to create or edit</div><svg class="r" style="left:1805px;top:1185px;" width="20" height="20" viewBox="0 0 20 20"><path d="M10 1 V19 M1 10 H19" stroke="#424242" stroke-width="1.3"/></svg><div class="r" style="left:2318px;top:1175px;width:40px;height:40px;border-radius:50%;background:#c6eed6"></div><div class="r" style="left:2330px;top:1188px;width:15px;height:15px;background:#107c41;border-radius:2px"></div><div class="t" style="left:1576px;width:1000px;text-align:center;top:1236.30px;font-size:15px;color:#616161;font-weight:400;">AI-generated content may be incorrect</div>
</body></html>
